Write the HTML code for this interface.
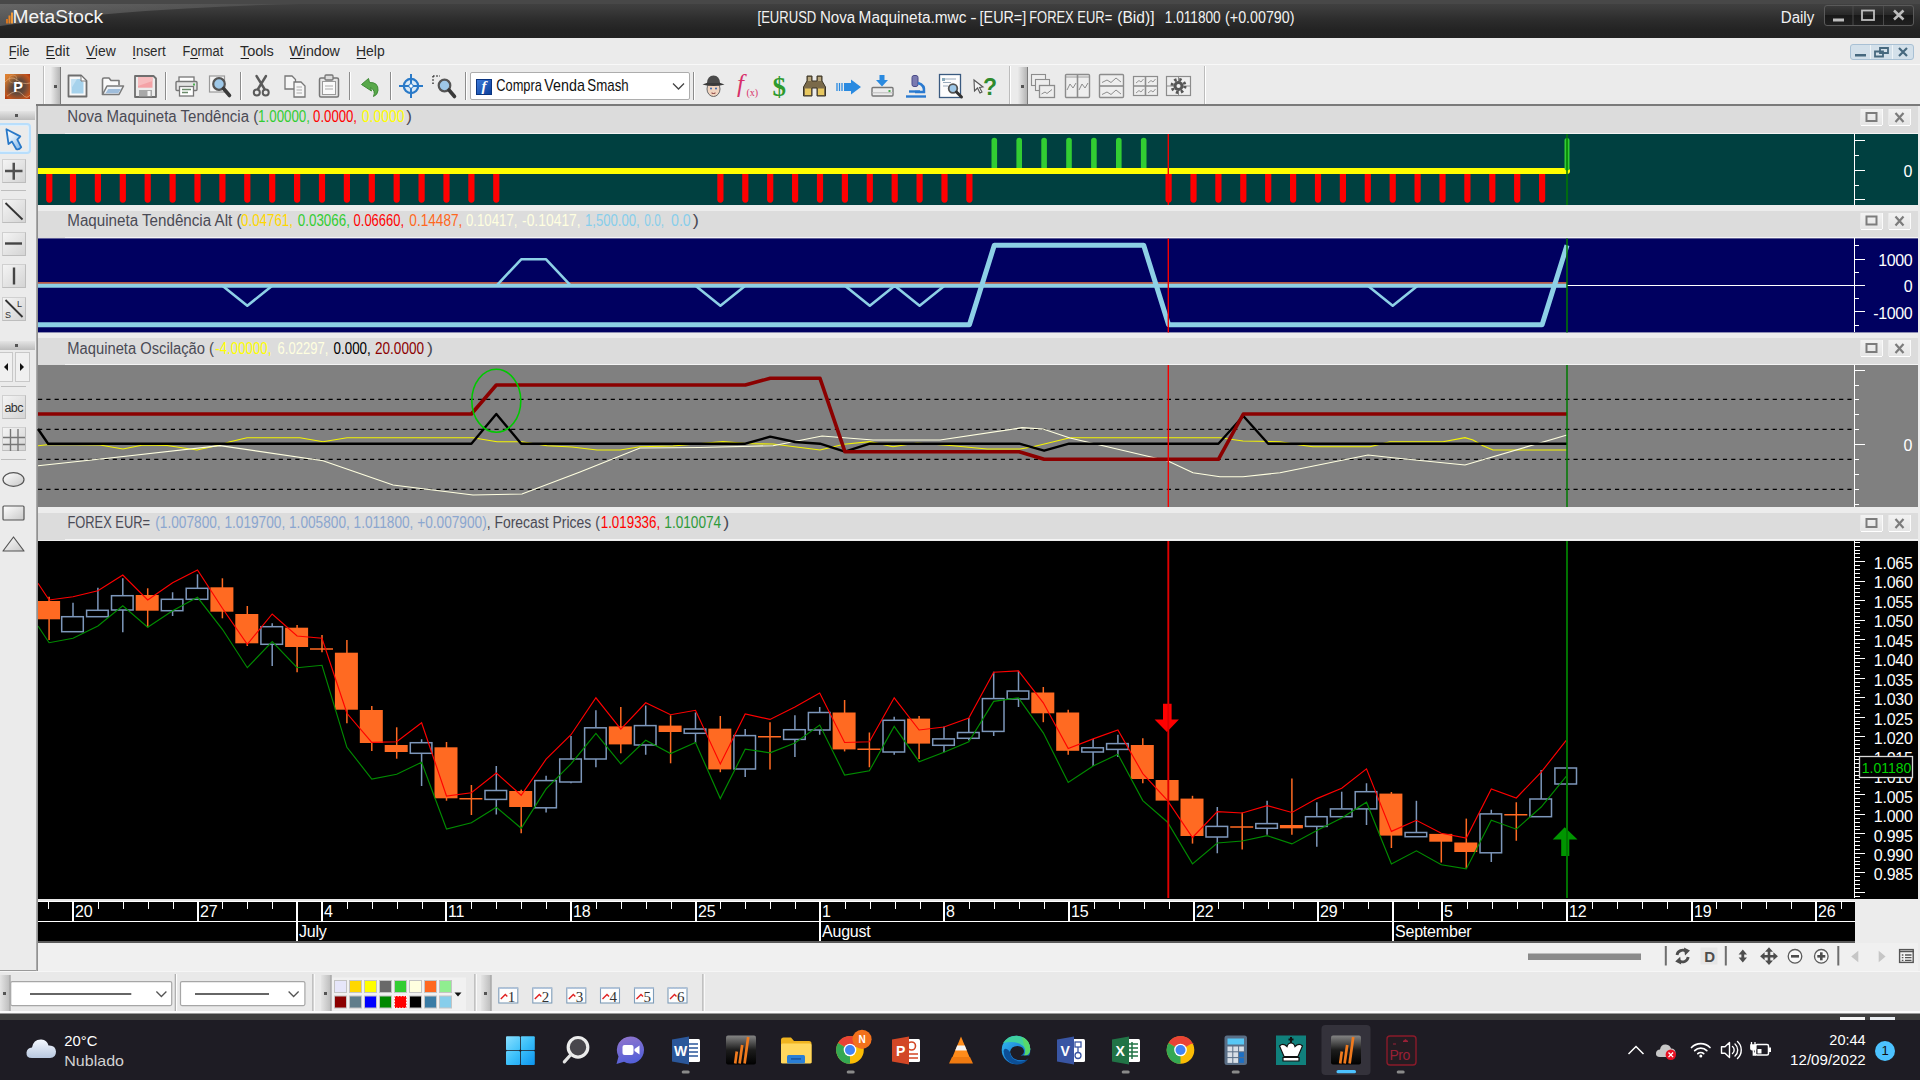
<!DOCTYPE html>
<html lang="pt"><head><meta charset="utf-8"><title>MetaStock - EURUSD Nova Maquineta</title>
<style>
*{box-sizing:border-box;margin:0;padding:0}
html,body{width:1920px;height:1080px;overflow:hidden;background:#f0f0f0}
body{font-family:"Liberation Sans",sans-serif;font-size:15px;color:#000}
#root{position:relative;width:1920px;height:1080px;overflow:hidden;background:#ececec}
.abs{position:absolute}
svg{position:absolute;left:0;top:0;overflow:visible}
svg text{font-family:"Liberation Sans",sans-serif}
#titlebar{left:0;top:0;width:1920px;height:38px;background:linear-gradient(#444 0,#3c3c3c 8px,#2c2c2c 20px,#232323 30px,#222 38px);color:#fff}
#titlebar .logo{left:14px;top:3px;font-size:21px;letter-spacing:-0.3px;color:#f2f2f2}
#titlebar .ttl{left:757px;top:8px;font-size:15px;white-space:pre;letter-spacing:-0.45px;color:#f4f4f4}
#titlebar .daily{left:1781px;top:8px;font-size:15px;letter-spacing:-0.3px;color:#f4f4f4}
#menubar{left:0;top:38px;width:1920px;height:27px;background:#ebebeb;border-bottom:1px solid #f8f8f8}
#menubar span{position:absolute;top:4px;font-size:15px;color:#1a1a1a;letter-spacing:-0.35px}
#menubar u{text-decoration-thickness:1px;text-underline-offset:2px}
#toolbar{left:0;top:65px;width:1920px;height:39px;background:#ebebeb}
#tbline{left:36px;top:104px;width:1884px;height:2px;background:#7a7a7a}
.vsep{position:absolute;width:1px;background:#8c8c8c;box-shadow:1px 0 0 #fff}
.ptitle{position:absolute;left:38px;width:1880px;background:#dcdcdc;font-size:15px;color:#4a4a55;white-space:pre;letter-spacing:0.05px}
.ptitle .t{position:absolute;left:30px;top:2px}
.ptitle .n{letter-spacing:-0.75px}
.pbtn{position:absolute;width:21px;height:16px;background:linear-gradient(#f2f2f2,#e4e4e4);box-shadow:0 1px 0 #fff,1px 0 0 #fafafa,-1px 0 0 #e8e8e8}
.lt{position:absolute;left:0;top:106px;width:36px;height:865px;background:#ebebeb}
.ltb{position:absolute;left:2px;width:24px;height:24px;background:linear-gradient(135deg,#f4f4f4,#d4d4d4);border:1px solid #d0d0d0;border-right-color:#bdbdbd;border-bottom-color:#bdbdbd}

</style></head>
<body>
<div id="root">
<div id="titlebar" class="abs"><svg width="1920" height="38"><defs><linearGradient id="wb" x1="0" y1="0" x2="0" y2="1"><stop offset="0" stop-color="#3c3c3c"/><stop offset=".5" stop-color="#262626"/><stop offset=".5" stop-color="#181818"/><stop offset="1" stop-color="#202020"/></linearGradient><linearGradient id="sheen" x1="0" y1="0" x2="1" y2="0"><stop offset="0" stop-color="#fff" stop-opacity=".2"/><stop offset="1" stop-color="#fff" stop-opacity=".07"/></linearGradient></defs><rect x="0" y="0" width="1920" height="4" fill="#484848"/><path d="M0 4 H300 Q130 8 0 26 Z" fill="url(#sheen)"/><rect x="6" y="19" width="2" height="4.500" fill="#d8741e"/><rect x="8.500" y="15.500" width="2" height="8" fill="#e6862a"/><rect x="11" y="12.500" width="2" height="11" fill="#f09a3a"/><text x="12.6" y="23.4" font-size="19.2" fill="#f4f4f4" textLength="90.6" lengthAdjust="spacingAndGlyphs" >MetaStock</text><text x="757.5" y="23.2" font-size="16" fill="#f2f2f2" textLength="58.8" lengthAdjust="spacingAndGlyphs" >[EURUSD</text><text x="819.9" y="23.2" font-size="16" fill="#f2f2f2" textLength="35.2" lengthAdjust="spacingAndGlyphs" >Nova</text><text x="858.6" y="23.2" font-size="16" fill="#f2f2f2" textLength="107.8" lengthAdjust="spacingAndGlyphs" >Maquineta.mwc</text><text x="970.3" y="23.2" font-size="16" fill="#f2f2f2" textLength="6.4" lengthAdjust="spacingAndGlyphs" >-</text><text x="979.6" y="23.2" font-size="16" fill="#f2f2f2" textLength="46.6" lengthAdjust="spacingAndGlyphs" >[EUR=]</text><text x="1029.2" y="23.2" font-size="16" fill="#f2f2f2" textLength="44.5" lengthAdjust="spacingAndGlyphs" >FOREX</text><text x="1077.3" y="23.2" font-size="16" fill="#f2f2f2" textLength="34.9" lengthAdjust="spacingAndGlyphs" >EUR=</text><text x="1117.3" y="23.2" font-size="16" fill="#f2f2f2" textLength="37.2" lengthAdjust="spacingAndGlyphs" >(Bid)]</text><text x="1164.8" y="23.2" font-size="16" fill="#f2f2f2" textLength="55.9" lengthAdjust="spacingAndGlyphs" >1.011800</text><text x="1225.1" y="23.2" font-size="16" fill="#f2f2f2" textLength="69.3" lengthAdjust="spacingAndGlyphs" >(+0.00790)</text><text x="1780.8" y="23.2" font-size="16" fill="#f2f2f2" textLength="33.4" lengthAdjust="spacingAndGlyphs" >Daily</text><rect x="1824.500" y="5.500" width="89" height="20" rx="2.500" fill="url(#wb)" stroke="#5a5a5a"/><path d="M1853 6 V25 M1883.500 6 V25" stroke="#4a4a4a"/><rect x="1833" y="18.500" width="11" height="3" fill="#bdbdbd"/><rect x="1862" y="10.500" width="12" height="9.500" fill="none" stroke="#bdbdbd" stroke-width="1.800"/><path d="M1894 10.500 L1903.500 19.500 M1903.500 10.500 L1894 19.500" stroke="#bdbdbd" stroke-width="2.600"/></svg></div>
<div id="menubar" class="abs"><svg width="1920" height="27"><text x="8.7" y="17.8" font-size="14" fill="#2a2a2a" textLength="20.8" lengthAdjust="spacingAndGlyphs" >File</text><rect x="9.4" y="20" width="6.9" height="1" fill="#1a1a1a"/><text x="45.6" y="17.8" font-size="14" fill="#2a2a2a" textLength="23.9" lengthAdjust="spacingAndGlyphs" >Edit</text><rect x="46.3" y="20" width="8.7" height="1" fill="#1a1a1a"/><text x="85.8" y="17.8" font-size="14" fill="#2a2a2a" textLength="29.9" lengthAdjust="spacingAndGlyphs" >View</text><rect x="86.5" y="20" width="9.5" height="1" fill="#1a1a1a"/><text x="132.3" y="17.8" font-size="14" fill="#2a2a2a" textLength="33.4" lengthAdjust="spacingAndGlyphs" >Insert</text><rect x="133" y="20" width="2.5" height="1" fill="#1a1a1a"/><text x="182.6" y="17.8" font-size="14" fill="#2a2a2a" textLength="40.6" lengthAdjust="spacingAndGlyphs" >Format</text><rect x="190.2" y="20" width="7.8" height="1" fill="#1a1a1a"/><text x="239.9" y="17.8" font-size="14" fill="#2a2a2a" textLength="33.8" lengthAdjust="spacingAndGlyphs" >Tools</text><rect x="240.6" y="20" width="8.4" height="1" fill="#1a1a1a"/><text x="289.3" y="17.8" font-size="14" fill="#2a2a2a" textLength="50.6" lengthAdjust="spacingAndGlyphs" >Window</text><rect x="290" y="20" width="14.5" height="1" fill="#1a1a1a"/><text x="356.0" y="17.8" font-size="14" fill="#2a2a2a" textLength="28.7" lengthAdjust="spacingAndGlyphs" >Help</text><rect x="356.7" y="20" width="9.3" height="1" fill="#1a1a1a"/><rect x="1850.500" y="6.500" width="63" height="15" rx="2.500" fill="#d3e0ea" stroke="#a8c0d4"/><path d="M1870.500 7 V21 M1892.500 7 V21" stroke="#eef4f8"/><rect x="1855" y="16" width="11" height="2.500" fill="#46687e"/><path d="M1880 10 H1888 V15 H1880 Z M1875 13.500 H1883 V18.500 H1875 Z" fill="#d3e0ea" stroke="#46687e" stroke-width="1.800"/><path d="M1899 10 L1907 18 M1907 10 L1899 18" stroke="#46687e" stroke-width="2.200"/></svg></div>
<div id="toolbar" class="abs"></div><div id="tbline" class="abs"></div>
<div class="vsep" style="left:165.0px;top:72px;height:28px"></div><div class="vsep" style="left:240.0px;top:72px;height:28px"></div><div class="vsep" style="left:349.0px;top:72px;height:28px"></div><div class="vsep" style="left:390.0px;top:72px;height:28px"></div><div class="vsep" style="left:465.0px;top:72px;height:28px"></div><div class="vsep" style="left:692.5px;top:72px;height:28px"></div><div class="vsep" style="left:43.0px;top:66px;height:38px;background:#bcbcbc"></div><div class="vsep" style="left:1009.0px;top:66px;height:38px;background:#bcbcbc"></div><div class="vsep" style="left:1204.0px;top:66px;height:38px;background:#bcbcbc"></div>
<div class="abs" style="left:51px;top:67px;width:10px;height:37px;background:linear-gradient(90deg,#e9e9e9,#b4b4b4);border-right:1px solid #7c7c7c"></div><div class="abs" style="left:54px;top:85px;width:3px;height:3px;background:#555"></div><div class="abs" style="left:1017.5px;top:67px;width:10px;height:37px;background:linear-gradient(90deg,#e9e9e9,#b4b4b4);border-right:1px solid #7c7c7c"></div><div class="abs" style="left:1020.5px;top:85px;width:3px;height:3px;background:#555"></div><div class="abs" style="left:470px;top:72px;width:220px;height:28px;background:#fff;border:1px solid #adadad;border-radius:2px"></div><div class="abs" style="left:476px;top:79px;width:16px;height:16px;background:linear-gradient(135deg,#3a78d8,#0d3f9a);border:1px solid #0a3480;color:#fff;font-family:'Liberation Serif',serif;font-style:italic;font-weight:bold;font-size:15px;line-height:13px;text-align:center">f</div><svg width="1920" height="110"><path d="M673 83.500 L678.500 89 L684 83.500" fill="none" stroke="#444" stroke-width="1.3"/>
<text x="496.3" y="91.2" font-size="15.7" fill="#111" textLength="45.6" lengthAdjust="spacingAndGlyphs" >Compra</text><text x="544.3" y="91.2" font-size="15.7" fill="#111" textLength="40.6" lengthAdjust="spacingAndGlyphs" >Venda</text><text x="587.3" y="91.2" font-size="15.7" fill="#111" textLength="41.4" lengthAdjust="spacingAndGlyphs" >Smash</text><g transform="translate(5,74)"><defs><radialGradient id="pg" cx=".5" cy=".5" r=".75"><stop offset="0" stop-color="#3c3834"/><stop offset=".42" stop-color="#6a4a38"/><stop offset=".75" stop-color="#c2541c"/><stop offset="1" stop-color="#a02810"/></radialGradient><linearGradient id="pg2" x1="0" y1="0" x2="1" y2="1"><stop offset="0" stop-color="#f0a040" stop-opacity=".75"/><stop offset=".4" stop-color="#f0a040" stop-opacity="0"/></linearGradient></defs><rect width="25" height="25" fill="url(#pg)"/><rect width="25" height="25" fill="url(#pg2)"/><path d="M0 8 Q6 1 12 6 T25 9" stroke="#f0c090" stroke-width="1" fill="none" opacity=".55"/><path d="M2 22 Q12 14 17 20 T25 21" stroke="#f0c8a0" stroke-width="1" fill="none" opacity=".5"/><circle cx="8" cy="5" r="4" fill="none" stroke="#f0c090" stroke-width=".8" opacity=".4"/><text x="8.300" y="18" font-size="14.500" font-weight="bold" fill="#fff">P</text></g>
<g transform="translate(67,74)"><path d="M1.5 1.5 H14 L19.5 7 V22.5 H1.5 Z" fill="#f8f8f8" stroke="#6e6e6e" stroke-width="1.8" stroke-linejoin="round"/><path d="M4.500 5 H13 L16.500 8.500 V19.500 H4.500 Z" fill="#a6d2ec"/><path d="M4.500 5 H10 L4.500 14 Z" fill="#c4e2f4"/><path d="M14 2 V7 H19" fill="#fff" stroke="#7a7a7a" stroke-width="1"/></g>
<g transform="translate(101,76)"><path d="M1.5 18.500 V3.5 Q1.5 2 3 2 H8 L10 4.5 H18 V9" fill="#fafafa" stroke="#7a7a7a" stroke-width="1.6" stroke-linejoin="round"/><path d="M1.5 18.500 L6 10 H22.500 L18 18.500 Z" fill="#eef2f6" stroke="#7a7a7a" stroke-width="1.6" stroke-linejoin="round"/><path d="M4.5 17.200 L7.300 13 H20 L17.200 17.200 Z" fill="#9fbddb"/></g>
<g transform="translate(134,75)"><path d="M1 1 H19.500 L22 3.500 V22 H1 Z" fill="#ececec" stroke="#6e6e6e" stroke-width="1.8" stroke-linejoin="round"/><rect x="4" y="2.200" width="14.500" height="10.500" fill="#f4a2a6"/><path d="M4 2.200 H18.500 V6 L4 11 Z" fill="#f7bcbe"/><rect x="5" y="15" width="13" height="6.500" fill="#a8a8a8"/><rect x="13.500" y="16" width="3" height="5" fill="#f4f4f4"/></g>
<g transform="translate(175,76)"><rect x="4" y="1" width="15" height="6" fill="#fff" stroke="#777" stroke-width="1.3"/><rect x="1" y="5.5" width="21" height="9" rx="1" fill="#e4e4e4" stroke="#777" stroke-width="1.4"/><rect x="18" y="7.5" width="2" height="2" fill="#4caf50"/><rect x="4.5" y="10.5" width="14" height="9.5" fill="#fff" stroke="#777" stroke-width="1.3"/><path d="M7 13.5 H16 M7 16.5 H13" stroke="#6a8a6a" stroke-width="1.4"/></g>
<g transform="translate(208,74)"><rect x="1.5" y="2" width="15" height="16" fill="#f4f4f4" stroke="#9a9a9a" stroke-width="1.2"/><circle cx="11" cy="10" r="5.8" fill="#9ec8e8" stroke="#555" stroke-width="2.2"/><path d="M15.5 14.5 L21.5 21.5" stroke="#3a3a3a" stroke-width="3.6" stroke-linecap="round"/></g>
<g transform="translate(252,75)"><path d="M4.5 1 L12.5 14 M14 1 L6 14" stroke="#5a5a5a" stroke-width="2.4" stroke-linecap="round"/><circle cx="4.8" cy="17.5" r="3" fill="none" stroke="#5a5a5a" stroke-width="2"/><circle cx="13.7" cy="17.5" r="3" fill="none" stroke="#5a5a5a" stroke-width="2"/></g>
<g transform="translate(284,75)"><path d="M1 1 H8 L11.5 4.5 V14 H1 Z" fill="#f6f6f6" stroke="#777" stroke-width="1.3"/><path d="M10 7 H17 L21 11 V22 H10 Z" fill="#f6f6f6" stroke="#777" stroke-width="1.3"/><path d="M12.5 12 H18 M12.5 15 H18 M12.5 18 H18" stroke="#aaa" stroke-width="1"/></g>
<g transform="translate(318,74)"><rect x="1.5" y="4" width="19" height="19" rx="1.5" fill="#e6e6e6" stroke="#777" stroke-width="1.5"/><rect x="4.5" y="7.5" width="13" height="13" fill="#fafafa" stroke="#9a9a9a" stroke-width="1"/><rect x="7" y="1" width="8" height="5" rx="1" fill="#dcdcdc" stroke="#777" stroke-width="1.3"/><path d="M7 12 H15 M7 15 H15" stroke="#aaa" stroke-width="1"/></g>
<g transform="translate(360,76)"><path d="M1.5 8.5 L8.5 2.5 L9.5 6.5 Q18.5 6 18 14.5 Q17.5 19 13.5 20.5 Q16 14.5 10.5 11.5 L11.5 15 Z" fill="#58a84a" stroke="#3d8a34" stroke-width="1"/></g>
<g transform="translate(399,74)"><circle cx="12" cy="12" r="7.2" fill="#dbeaf6" stroke="#2a7ac8" stroke-width="2.2"/><path d="M12 0 V24 M0 12 H24" stroke="#2a7ac8" stroke-width="2"/><circle cx="12" cy="12" r="2.2" fill="#fff" stroke="#2a7ac8" stroke-width="1"/></g>
<g transform="translate(432,75)"><path d="M1 1 H8 M1 1 V9" stroke="#444" stroke-width="1.6" stroke-dasharray="1.6 1.6"/><circle cx="12.5" cy="10.5" r="5.8" fill="#9ec8e8" stroke="#555" stroke-width="2.2"/><path d="M17 15 L22.5 21.5" stroke="#3a3a3a" stroke-width="3.6" stroke-linecap="round"/></g>
<g transform="translate(702,74)"><ellipse cx="11.5" cy="15" rx="6.5" ry="7.5" fill="#f0d4c0" stroke="#6a6a6a" stroke-width="1"/><path d="M0.5 10.5 Q11.5 5 22.5 10.5 Q11.5 13.5 0.5 10.5 Z" fill="#3a3a3a"/><path d="M5 9 Q5.5 1.5 11.5 1.5 Q17.5 1.5 18 9 Z" fill="#4a4a4a"/><circle cx="9" cy="14.5" r="1" fill="#3a6ab0"/><circle cx="14" cy="14.5" r="1" fill="#3a6ab0"/><path d="M9.5 19 Q11.5 20 13.5 19" stroke="#803030" fill="none"/></g>
<g transform="translate(736,73)"><text x="1" y="19" style="font-family:Liberation Serif,serif;font-style:italic" font-size="25" fill="#d8306a">f</text><text x="10.500" y="22.500" style="font-family:Liberation Serif,serif" font-size="10" fill="#d8306a">(x)</text></g>
<g transform="translate(772,72)"><text x="0.5" y="24" style="font-family:Liberation Serif,serif" font-weight="bold" font-size="27" fill="#2e9a2e">$</text></g>
<g transform="translate(803,75)"><path d="M4 1 H9 V6 H14 V1 H19 V6 L22.5 12 V21 H14 V13 H9 V21 H0.5 V12 L4 6 Z" fill="#7a6a4a" stroke="#3a3426" stroke-width="1"/><rect x="2" y="13.5" width="6" height="6.5" fill="#e8c860"/><rect x="15" y="13.5" width="6" height="6.5" fill="#e8c860"/><rect x="5" y="2" width="3" height="4" fill="#b8a880"/><rect x="15" y="2" width="3" height="4" fill="#b8a880"/></g>
<g transform="translate(836,79)"><path d="M1 4 V12 M3.5 4 V12 M6 4 V12" stroke="#2a8ae0" stroke-width="1.3"/><path d="M8 4 H15 V0.5 L25 8 L15 15.5 V12 H8 Z" fill="#2a8ae0"/></g>
<g transform="translate(871,75)"><path d="M8.5 0 H13.5 V5 H17 L11 11.5 L5 5 H8.5 Z" fill="#2a8ae0"/><rect x="1" y="12.5" width="21" height="8.5" rx="1" fill="#ececec" stroke="#777" stroke-width="1.4"/><rect x="17.5" y="15" width="2" height="2" fill="#4caf50"/><path d="M1 17.8 H22" stroke="#bbb"/></g>
<g transform="translate(905,75)"><rect x="7" y="0.5" width="6" height="11" rx="2" fill="#7a7ab0" stroke="#4a4a88" stroke-width="1"/><path d="M13 8 Q20 10 19 17 H10" fill="none" stroke="#2a7ad0" stroke-width="2.6"/><path d="M1 21.5 H21" stroke="#2a7ad0" stroke-width="2.4"/><path d="M4 16.5 H15" stroke="#2a7ad0" stroke-width="2.4"/></g>
<g transform="translate(939,74)"><rect x="0.5" y="0.5" width="21" height="23" fill="#fdfdfd" stroke="#3a5a80" stroke-width="1.3"/><path d="M4 5 H17 M4 8.5 H12 M4 12 H9" stroke="#9ab" stroke-width="1.2"/><rect x="3" y="4" width="3" height="3" fill="#8ab"/><circle cx="14" cy="14.5" r="4.3" fill="#9ec8e8" stroke="#555" stroke-width="1.8"/><path d="M17.5 18 L22.5 23" stroke="#333" stroke-width="3" stroke-linecap="round"/></g>
<g transform="translate(973,75)"><path d="M1 5 L1.5 16 L4.5 13 L7 18 L9 17 L6.5 12.5 L10 12 Z" fill="#f4f4f4" stroke="#555" stroke-width="1.1"/><text x="10" y="20" font-weight="bold" font-size="23" fill="#2e8a2e">?</text></g>
<g transform="translate(1031,74)"><rect x="0.5" y="0.5" width="14" height="11" fill="#eee" stroke="#8c8c8c" stroke-width="1.1"/><rect x="4.5" y="5.5" width="14" height="11" fill="#eee" stroke="#8c8c8c" stroke-width="1.1"/><rect x="8.5" y="11.5" width="15" height="12" fill="#eee" stroke="#8c8c8c" stroke-width="1.3"/><path d="M10.5 20 L14 18 L16 19.5 L21 15.5" stroke="#8c8c8c" fill="none"/></g>
<g transform="translate(1065,74)"><rect x="0.5" y="0.5" width="24" height="23" rx="1" fill="#eee" stroke="#8c8c8c" stroke-width="1.4"/><path d="M12.5 0.5 V23.5" stroke="#8c8c8c" stroke-width="1.6"/><path d="M2 16 L5 10 L8 14 L11 9 M14 16 L17 10 L20 14 L23 9" stroke="#8c8c8c" fill="none" stroke-width="1"/><path d="M1 3 H24" stroke="#8c8c8c" stroke-width=".8"/></g>
<g transform="translate(1099,74)"><rect x="0.5" y="0.5" width="24" height="23" rx="1" fill="#eee" stroke="#8c8c8c" stroke-width="1.4"/><path d="M0.5 12 H24.5" stroke="#8c8c8c" stroke-width="1.6"/><path d="M3 8.5 L8 6 L12 8.5 L17 4 L22 8 M3 20.5 L8 18 L12 20.5 L17 16 L22 20" stroke="#8c8c8c" fill="none" stroke-width="1"/></g>
<g transform="translate(1133,76)"><rect x="0.5" y="0.5" width="24" height="19" fill="#eee" stroke="#8c8c8c" stroke-width="1.2"/><path d="M12.5 0.5 V19.5 M0.5 10 H24.5" stroke="#8c8c8c" stroke-width="1.6"/><path d="M3 7 L6 4.5 L8 6 L10.5 3 M15 7 L18 4.5 L20 6 L22.5 3 M3 17 L6 14.5 L8 16 L10.5 13 M15 17 L18 14.5 L20 16 L22.5 13" stroke="#8c8c8c" fill="none" stroke-width=".9"/></g>
<g transform="translate(1166,76)"><rect x="0.5" y="0.5" width="24" height="19" fill="#eee" stroke="#8c8c8c" stroke-width="1.2"/><path d="M12.5 0.5 V19.5 M0.5 10 H24.5" stroke="#8c8c8c" stroke-width="1"/><circle cx="12.5" cy="10" r="5" fill="#555"/><circle cx="12.5" cy="10" r="6.5" fill="none" stroke="#555" stroke-width="3" stroke-dasharray="2.4 2.7"/><circle cx="12.5" cy="10" r="2" fill="#eee"/></g>
</svg>
<div class="lt"></div><div class="abs" style="left:0;top:970px;width:37px;height:1px;background:#9a9a9a"></div><div class="abs" style="left:35.500px;top:106px;width:2px;height:865px;background:linear-gradient(90deg,#b4b4b4,#868686)"></div>
<div class="abs" style="left:0;top:111px;width:35px;height:9px;background:linear-gradient(#e4e4e4,#bcbcbc)"></div><div class="abs" style="left:15px;top:114px;width:3px;height:3px;background:#555"></div><div class="abs" style="left:0;top:341px;width:35px;height:9px;background:linear-gradient(#e4e4e4,#bcbcbc)"></div><div class="abs" style="left:15px;top:344px;width:3px;height:3px;background:#555"></div><div class="abs" style="left:-3px;top:122.5px;width:34px;height:31px;background:#ebebeb;border:2.5px solid #b8defc;border-radius:4px;box-shadow:inset 0 0 0 1px #dceefc"></div><div class="ltb" style="top:159px"></div><div class="ltb" style="top:199px"></div><div class="ltb" style="top:231.5px"></div><div class="ltb" style="top:264px"></div><div class="ltb" style="top:296.5px"></div><div class="ltb" style="top:395px"></div><div class="ltb" style="top:427px"></div><div class="abs" style="left:1px;top:190px;width:25px;height:1px;background:#bdbdbd"></div><div class="abs" style="left:1px;top:386px;width:25px;height:1px;background:#bdbdbd"></div><div class="abs" style="left:1px;top:458.5px;width:25px;height:1px;background:#bdbdbd"></div><div class="abs" style="left:0;top:352px;width:13px;height:30px;background:#f0f0f0;border:1px solid #c8c8c8;border-left:none"></div><div class="abs" style="left:15px;top:352px;width:15px;height:30px;background:#f0f0f0;border:1px solid #c8c8c8"></div><svg width="40" height="980"><defs><linearGradient id="arw" x1="0" y1="0" x2="1" y2="1"><stop offset="0" stop-color="#fff"/><stop offset=".45" stop-color="#d6e8f8"/><stop offset="1" stop-color="#7ab2e8"/></linearGradient></defs><path d="M6.4 129.2 L8.5 144 L12 141.6 L16.4 149.2 Q19 150 21.2 147.2 L17.3 139.7 L20.3 136.4 Z" fill="url(#arw)" stroke="#2878c8" stroke-width="1.8" stroke-linejoin="round"/><path d="M5 171 H22.5 M13.75 162.7 V179.8" stroke="#505050" stroke-width="2.5"/><path d="M5.500 203 L22.500 219.500" stroke="#333" stroke-width="1.8"/><path d="M5 243.500 H22" stroke="#444" stroke-width="2.4"/><path d="M14 267.500 V284.500" stroke="#444" stroke-width="2.4"/><path d="M5.500 300 L22.500 317" stroke="#333" stroke-width="1.8"/><text x="17" y="307" font-size="9" fill="#333">L</text><text x="5" y="318" font-size="9" fill="#333">S</text><path d="M8 363 L4 367 L8 371 Z M20 363 L24 367 L20 371 Z" fill="#111"/><text x="4.500" y="412" font-size="12.500" fill="#333" letter-spacing="-0.6">abc</text><path d="M3 437.500 H25 M3 444.500 H25 M10.500 429 V451 M18 429 V451" stroke="#777" stroke-width="1.4"/><defs><linearGradient id="shp" x1="0" y1="0" x2="1" y2="1"><stop offset="0" stop-color="#fff"/><stop offset="1" stop-color="#c8c8c8"/></linearGradient></defs><ellipse cx="13.500" cy="479.500" rx="10.500" ry="6.800" fill="url(#shp)" stroke="#555" stroke-width="1.2"/><rect x="3" y="506" width="21" height="14" rx="1" fill="url(#shp)" stroke="#555" stroke-width="1.2"/><path d="M13.500 537 L24 551 H3 Z" fill="url(#shp)" stroke="#555" stroke-width="1.2" stroke-linejoin="round"/></svg>
<div class="ptitle" style="top:106px;height:28px"><div class="abs" style="left:27px;bottom:0;width:1853px;height:1px;background:#f4f4f4"></div><div class="pbtn" style="left:1823px;top:3px"></div><div class="pbtn" style="left:1851px;top:3px"></div></div>
<div class="ptitle" style="top:210.5px;height:27.5px"><div class="abs" style="left:27px;bottom:0;width:1853px;height:1px;background:#f4f4f4"></div><div class="pbtn" style="left:1823px;top:2px"></div><div class="pbtn" style="left:1851px;top:2px"></div></div>
<div class="ptitle" style="top:338px;height:27px"><div class="abs" style="left:27px;bottom:0;width:1853px;height:1px;background:#f4f4f4"></div><div class="pbtn" style="left:1823px;top:2px"></div><div class="pbtn" style="left:1851px;top:2px"></div></div>
<div class="ptitle" style="top:513px;height:27px"><div class="abs" style="left:27px;bottom:0;width:1853px;height:1px;background:#f4f4f4"></div><div class="pbtn" style="left:1823px;top:2px"></div><div class="pbtn" style="left:1851px;top:2px"></div></div>
<svg width="1920" height="1080">
<rect x="1866.500" y="113.0" width="10" height="8" fill="none" stroke="#7c7c7c" stroke-width="2"/><path d="M1895.500 113.0 L1903.500 122.0 M1903.500 113.0 L1895.500 122.0" stroke="#7c7c7c" stroke-width="2.2"/><rect x="1866.500" y="216.5" width="10" height="8" fill="none" stroke="#7c7c7c" stroke-width="2"/><path d="M1895.500 216.5 L1903.500 225.5 M1903.500 216.5 L1895.500 225.5" stroke="#7c7c7c" stroke-width="2.2"/><rect x="1866.500" y="344.0" width="10" height="8" fill="none" stroke="#7c7c7c" stroke-width="2"/><path d="M1895.500 344.0 L1903.500 353.0 M1903.500 344.0 L1895.500 353.0" stroke="#7c7c7c" stroke-width="2.2"/><rect x="1866.500" y="519.0" width="10" height="8" fill="none" stroke="#7c7c7c" stroke-width="2"/><path d="M1895.500 519.0 L1903.500 528.0 M1903.500 519.0 L1895.500 528.0" stroke="#7c7c7c" stroke-width="2.2"/>
<g font-size="15"><text x="67.3" y="122.2" font-size="15.6" fill="#4a4a55" textLength="190.9" lengthAdjust="spacingAndGlyphs" >Nova Maquineta Tendência (</text><text x="258.1" y="122.2" font-size="15.6" fill="#32cd32" textLength="51.9" lengthAdjust="spacingAndGlyphs" >1.00000,</text><text x="313.1" y="122.2" font-size="15.6" fill="#ff0000" textLength="43.9" lengthAdjust="spacingAndGlyphs" >0.0000,</text><text x="361.8" y="122.2" font-size="15.6" fill="#ffff00" textLength="42.7" lengthAdjust="spacingAndGlyphs" >0.0000</text><text x="406.3" y="122.2" font-size="15.6" fill="#4a4a55" textLength="5.7" lengthAdjust="spacingAndGlyphs" >)</text><text x="67.3" y="225.5" font-size="15.6" fill="#4a4a55" textLength="174.2" lengthAdjust="spacingAndGlyphs" >Maquineta Tendência Alt (</text><text x="241.0" y="225.5" font-size="15.6" fill="#ffd700" textLength="52.0" lengthAdjust="spacingAndGlyphs" >0.04761,</text><text x="297.8" y="225.5" font-size="15.6" fill="#32cd32" textLength="52.1" lengthAdjust="spacingAndGlyphs" >0.03066,</text><text x="353.6" y="225.5" font-size="15.6" fill="#ff0000" textLength="50.4" lengthAdjust="spacingAndGlyphs" >0.06660,</text><text x="409.3" y="225.5" font-size="15.6" fill="#ff6820" textLength="53.1" lengthAdjust="spacingAndGlyphs" >0.14487,</text><text x="466.0" y="225.5" font-size="15.6" fill="#ffffe0" textLength="51.4" lengthAdjust="spacingAndGlyphs" >0.10417,</text><text x="522.0" y="225.5" font-size="15.6" fill="#ffffe0" textLength="58.7" lengthAdjust="spacingAndGlyphs" >-0.10417,</text><text x="585.0" y="225.5" font-size="15.6" fill="#87ceeb" textLength="54.7" lengthAdjust="spacingAndGlyphs" >1,500.00,</text><text x="644.3" y="225.5" font-size="15.6" fill="#87ceeb" textLength="19.7" lengthAdjust="spacingAndGlyphs" >0.0,</text><text x="671.0" y="225.5" font-size="15.6" fill="#87ceeb" textLength="19.7" lengthAdjust="spacingAndGlyphs" >0.0</text><text x="692.8" y="225.5" font-size="15.6" fill="#4a4a55" textLength="6.2" lengthAdjust="spacingAndGlyphs" >)</text><text x="67.3" y="353.8" font-size="15.6" fill="#4a4a55" textLength="146.7" lengthAdjust="spacingAndGlyphs" >Maquineta Oscilação (</text><text x="215.3" y="353.8" font-size="15.6" fill="#ffff00" textLength="56.1" lengthAdjust="spacingAndGlyphs" >-4.00000,</text><text x="277.6" y="353.8" font-size="15.6" fill="#ffffe0" textLength="50.8" lengthAdjust="spacingAndGlyphs" >6.02297,</text><text x="333.6" y="353.8" font-size="15.6" fill="#000" textLength="37.1" lengthAdjust="spacingAndGlyphs" >0.000,</text><text x="375.0" y="353.8" font-size="15.6" fill="#8b0000" textLength="49.0" lengthAdjust="spacingAndGlyphs" >20.0000</text><text x="427.0" y="353.8" font-size="15.6" fill="#4a4a55" textLength="6.0" lengthAdjust="spacingAndGlyphs" >)</text><text x="67.4" y="528.3" font-size="15.6" fill="#4a4a55" textLength="82.7" lengthAdjust="spacingAndGlyphs" >FOREX EUR=</text><text x="155.3" y="528.3" font-size="15.6" fill="#8ba6cf" textLength="331.4" lengthAdjust="spacingAndGlyphs" >(1.007800, 1.019700, 1.005800, 1.011800, +0.007900)</text><text x="486.7" y="528.3" font-size="15.6" fill="#4a4a55" textLength="113.1" lengthAdjust="spacingAndGlyphs" >, Forecast Prices (</text><text x="600.7" y="528.3" font-size="15.6" fill="#ff0000" textLength="59.5" lengthAdjust="spacingAndGlyphs" >1.019336,</text><text x="664.3" y="528.3" font-size="15.6" fill="#2e9a3a" textLength="56.9" lengthAdjust="spacingAndGlyphs" >1.010074</text><text x="723.3" y="528.3" font-size="15.6" fill="#4a4a55" textLength="6.0" lengthAdjust="spacingAndGlyphs" >)</text></g>
<rect x="38" y="134" width="1880" height="71" fill="#004040" shape-rendering="crispEdges"/>
<g stroke="#ff0000" stroke-width="6.200" stroke-linecap="round"><path d="M49.3 174 V199.600"/><path d="M73 174 V199.600"/><path d="M97.9 174 V199.600"/><path d="M122.8 174 V199.600"/><path d="M147.7 174 V199.600"/><path d="M172.6 174 V199.600"/><path d="M197.5 174 V199.600"/><path d="M222.4 174 V199.600"/><path d="M247.3 174 V199.600"/><path d="M272.2 174 V199.600"/><path d="M297.1 174 V199.600"/><path d="M322 174 V199.600"/><path d="M346.9 174 V199.600"/><path d="M371.8 174 V199.600"/><path d="M396.7 174 V199.600"/><path d="M421.6 174 V199.600"/><path d="M446.5 174 V199.600"/><path d="M471.4 174 V199.600"/><path d="M496.3 174 V199.600"/><path d="M720.4 174 V199.600"/><path d="M745.3 174 V199.600"/><path d="M770.2 174 V199.600"/><path d="M795.1 174 V199.600"/><path d="M820 174 V199.600"/><path d="M844.9 174 V199.600"/><path d="M869.8 174 V199.600"/><path d="M894.7 174 V199.600"/><path d="M919.6 174 V199.600"/><path d="M944.5 174 V199.600"/><path d="M969.4 174 V199.600"/><path d="M1168.6 174 V199.600"/><path d="M1193.5 174 V199.600"/><path d="M1218.4 174 V199.600"/><path d="M1243.3 174 V199.600"/><path d="M1268.2 174 V199.600"/><path d="M1293.1 174 V199.600"/><path d="M1318 174 V199.600"/><path d="M1342.9 174 V199.600"/><path d="M1367.8 174 V199.600"/><path d="M1392.7 174 V199.600"/><path d="M1417.6 174 V199.600"/><path d="M1442.5 174 V199.600"/><path d="M1467.4 174 V199.600"/><path d="M1492.3 174 V199.600"/><path d="M1517.2 174 V199.600"/><path d="M1542.1 174 V199.600"/></g>
<g stroke="#32cd32" stroke-width="5.600" stroke-linecap="round"><path d="M994.3 140.500 V168"/><path d="M1019.2 140.500 V168"/><path d="M1044.1 140.500 V168"/><path d="M1069 140.500 V168"/><path d="M1093.9 140.500 V168"/><path d="M1118.8 140.500 V168"/><path d="M1143.7 140.500 V168"/></g>
<path d="M38 171 H1567" stroke="#ffff00" stroke-width="6"/><circle cx="1567" cy="171" r="3" fill="#ffff00"/>
<path d="M1567 140.500 V168" stroke="#32cd32" stroke-width="5" stroke-linecap="round"/>
<g stroke="#fff" stroke-width="1.2" shape-rendering="crispEdges"><path d="M1854.500 134 V205"/><path d="M1855 140.5 h10"/><path d="M1855 155.5 h4"/><path d="M1855 170.5 h10"/><path d="M1855 185.5 h4"/><path d="M1855 199.5 h10"/></g><text x="1912.300" y="176.800" font-size="16" fill="#fff" text-anchor="end">0</text>
<rect x="38" y="238.400" width="1880" height="94" fill="#000060"/>
<path d="M1567 285.500 H1855" stroke="#fff" stroke-width="1.2" shape-rendering="crispEdges"/><path d="M38 283 H1567" stroke="#f07840" stroke-width="1.400"/><path d="M38 285.700 H1567" stroke="#8dd0e6" stroke-width="4"/>
<polyline points="38,285.8 48.1,285.8 73,285.8 97.9,285.8 122.8,285.8 147.7,285.8 172.6,285.8 197.5,285.8 222.4,285.8 247.3,305.7 272.2,285.8 297.1,285.8 322,285.8 346.9,285.8 371.8,285.8 396.7,285.8 421.6,285.8 446.5,285.8 471.4,285.8 496.3,285.8 521.2,259.3 546.1,259.3 571,285.8 595.9,285.8 620.8,285.8 645.7,285.8 670.6,285.8 695.5,285.8 720.4,305.7 745.3,285.8 770.2,285.8 795.1,285.8 820,285.8 844.9,285.8 869.8,305.7 894.7,285.8 919.6,305.7 944.5,285.8 969.4,285.8 994.3,285.8 1019.2,285.8 1044.1,285.8 1069,285.8 1093.9,285.8 1118.8,285.8 1143.7,285.8 1168.6,285.8 1193.5,285.8 1218.4,285.8 1243.3,285.8 1268.2,285.8 1293.1,285.8 1318,285.8 1342.9,285.8 1367.8,285.8 1392.7,305.7 1417.6,285.8 1442.5,285.8 1467.4,285.8 1492.3,285.8 1517.2,285.8 1542.1,285.8 1567,285.8" fill="none" stroke="#8dd0e6" stroke-width="2.600" stroke-linejoin="round"/>
<polyline points="38,324.8 48.1,324.8 73,324.8 97.9,324.8 122.8,324.8 147.7,324.8 172.6,324.8 197.5,324.8 222.4,324.8 247.3,324.8 272.2,324.8 297.1,324.8 322,324.8 346.9,324.8 371.8,324.8 396.7,324.8 421.6,324.8 446.5,324.8 471.4,324.8 496.3,324.8 521.2,324.8 546.1,324.8 571,324.8 595.9,324.8 620.8,324.8 645.7,324.8 670.6,324.8 695.5,324.8 720.4,324.8 745.3,324.8 770.2,324.8 795.1,324.8 820,324.8 844.9,324.8 869.8,324.8 894.7,324.8 919.6,324.8 944.5,324.8 969.4,324.8 994.3,245.3 1019.2,245.3 1044.1,245.3 1069,245.3 1093.9,245.3 1118.8,245.3 1143.7,245.3 1168.6,324.8 1193.5,324.8 1218.4,324.8 1243.3,324.8 1268.2,324.8 1293.1,324.8 1318,324.8 1342.9,324.8 1367.8,324.8 1392.7,324.8 1417.6,324.8 1442.5,324.8 1467.4,324.8 1492.3,324.8 1517.2,324.8 1542.1,324.8 1567,245.3" fill="none" stroke="#8dd0e6" stroke-width="5" stroke-linejoin="round" stroke-linecap="butt"/>
<g stroke="#fff" stroke-width="1.2" shape-rendering="crispEdges"><path d="M1854.500 238 V332"/><path d="M1855 245.5 h4"/><path d="M1855 259.5 h10"/><path d="M1855 272.5 h4"/><path d="M1855 285.5 h10"/><path d="M1855 298.5 h4"/><path d="M1855 311.5 h10"/><path d="M1855 325.5 h4"/></g><g font-size="16" fill="#fff" text-anchor="end" letter-spacing="-0.4"><text x="1912.300" y="266.300">1000</text><text x="1912.300" y="292.200">0</text><text x="1912.300" y="318.600">-1000</text></g>
<rect x="38" y="365" width="1880" height="142" fill="#808080" shape-rendering="crispEdges"/>
<g stroke="#000" stroke-width="1.3" stroke-dasharray="4.2 4.1"><path d="M38 399.3 H1855"/><path d="M38 429.3 H1855"/><path d="M38 459.3 H1855"/><path d="M38 489.3 H1855"/></g>
<polyline points="38,445.7 50,444.5 100,445 123,449 143,445 167,445.5 197,450 220,445 230,441.7 247,437.7 300,437.7 323,441.7 347,437.7 473,437.7 497,441.7 522,441.7 547,445.7 572,447 597,450 620,450 640,446.7 673,446 723,441.7 750,443.7 773,444 820,450 844,444.3 870,441.7 893,446.7 917,443 953,445.7 987,449 1020,449 1033,446.7 1070,437.7 1220,437.7 1243,441 1280,441.7 1300,445 1313,446.7 1370,446.7 1377,445 1390,441.7 1443,441.7 1465,437.7 1473,440 1483,445.7 1493,450 1567,450" fill="none" stroke="#f4f400" stroke-width="1.150"/>
<polyline points="38,465.7 110,458 220,445.7 323,460.7 393,485 473,495 522,494 580,472 640,448 700,447.5 773,445.7 822,436 873,440 940,440 1022,427.7 1043,429 1070,438 1150,456.7 1168,461 1193,472.7 1220,476.7 1243,476.7 1280,472.7 1368,455 1393,457.7 1465,465 1567,435" fill="none" stroke="#ffffe0" stroke-width="1.150"/>
<polyline points="38,429 48.1,443.7 73,443.7 97.9,443.7 122.8,443.7 147.7,443.7 172.6,443.7 197.5,443.7 222.4,443.7 247.3,443.7 272.2,443.7 297.1,443.7 322,443.7 346.9,443.7 371.8,443.7 396.7,443.7 421.6,443.7 446.5,443.7 471.4,443.7 496.3,414 521.2,443.7 546.1,443.7 571,443.7 595.9,443.7 620.8,443.7 645.7,443.7 670.6,443.7 695.5,443.7 720.4,443.7 745.3,443.7 770.2,436.7 795.1,442 820,443.7 844.9,451.7 869.8,443.7 894.7,443.7 919.6,443.7 944.5,443.7 969.4,443.7 994.3,443.7 1019.2,443.7 1044.1,450.7 1069,443.7 1093.9,443.7 1118.8,443.7 1143.7,443.7 1168.6,443.7 1193.5,443.7 1218.4,443.7 1243.3,416 1268.2,443.7 1293.1,443.7 1318,443.7 1342.9,443.7 1367.8,443.7 1392.7,443.7 1417.6,443.7 1442.5,443.7 1467.4,443.7 1492.3,443.7 1517.2,443.7 1542.1,443.7 1567,443.7" fill="none" stroke="#000" stroke-width="2.400" stroke-linejoin="round"/>
<polyline points="38,414 48.1,414 73,414 97.9,414 122.8,414 147.7,414 172.6,414 197.5,414 222.4,414 247.3,414 272.2,414 297.1,414 322,414 346.9,414 371.8,414 396.7,414 421.6,414 446.5,414 471.4,414 496.3,385 521.2,385 546.1,385 571,385 595.9,385 620.8,385 645.7,385 670.6,385 695.5,385 720.4,385 745.3,385 770.2,378.3 795.1,378.3 820,378.3 844.9,451.7 869.8,451.7 894.7,451.7 919.6,451.7 944.5,451.7 969.4,451.7 994.3,451.7 1019.2,451.7 1044.1,459.3 1069,459.3 1093.9,459.3 1118.8,459.3 1143.7,459.3 1168.6,459.3 1193.5,459.3 1218.4,459.3 1243.3,414 1268.2,414 1293.1,414 1318,414 1342.9,414 1367.8,414 1392.7,414 1417.6,414 1442.5,414 1467.4,414 1492.3,414 1517.2,414 1542.1,414 1567,414" fill="none" stroke="#8b0000" stroke-width="3.600" stroke-linejoin="round"/>
<ellipse cx="496.3" cy="400.700" rx="24.500" ry="31.500" fill="none" stroke="#00c800" stroke-width="1.600"/>
<g stroke="#fff" stroke-width="1.2" shape-rendering="crispEdges"><path d="M1854.500 365 V507"/><path d="M1855 370.5 h10"/><path d="M1855 385.5 h4"/><path d="M1855 399.5 h4"/><path d="M1855 414.5 h4"/><path d="M1855 429.5 h4"/><path d="M1855 444.5 h10"/><path d="M1855 459.5 h4"/><path d="M1855 474.5 h4"/><path d="M1855 489.5 h4"/><path d="M1855 504.5 h4"/></g><text x="1912.300" y="451.300" font-size="16" fill="#fff" text-anchor="end">0</text>
<rect x="38" y="541" width="1880" height="357.500" fill="#000" shape-rendering="crispEdges"/>
<clipPath id="c4"><rect x="38" y="541" width="1817" height="357"/></clipPath><g clip-path="url(#c4)">
<path d="M49.1 596.7 V640" stroke="#ff6a22" stroke-width="1.5"/><rect x="37.1" y="601" width="23" height="18.3" fill="#ff6a22"/>
<path d="M73 602.7 V616.7 M73 631.7 V631.7" stroke="#7d97bb" stroke-width="1.5"/><rect x="61.7" y="616.7" width="21.600" height="15" fill="none" stroke="#7d97bb" stroke-width="1.5"/>
<path d="M97.9 587.7 V610.3 M97.9 616.7 V616.7" stroke="#7d97bb" stroke-width="1.5"/><rect x="86.6" y="610.3" width="21.600" height="6.4" fill="none" stroke="#7d97bb" stroke-width="1.5"/>
<path d="M122.8 578.3 V595.7 M122.8 610 V632.3" stroke="#7d97bb" stroke-width="1.5"/><rect x="111.5" y="595.7" width="21.600" height="14.3" fill="none" stroke="#7d97bb" stroke-width="1.5"/>
<path d="M147.7 588.3 V627.3" stroke="#ff6a22" stroke-width="1.5"/><rect x="135.7" y="595" width="23" height="15.7" fill="#ff6a22"/>
<path d="M172.6 592.3 V599.3 M172.6 610.7 V616" stroke="#7d97bb" stroke-width="1.5"/><rect x="161.3" y="599.3" width="21.600" height="11.4" fill="none" stroke="#7d97bb" stroke-width="1.5"/>
<path d="M197.5 574.3 V588.3 M197.5 599.3 V599.3" stroke="#7d97bb" stroke-width="1.5"/><rect x="186.2" y="588.3" width="21.600" height="11" fill="none" stroke="#7d97bb" stroke-width="1.5"/>
<path d="M222.4 578.3 V618.3" stroke="#ff6a22" stroke-width="1.5"/><rect x="210.4" y="587.3" width="23" height="24.4" fill="#ff6a22"/>
<path d="M247.3 606 V646" stroke="#ff6a22" stroke-width="1.5"/><rect x="235.3" y="614" width="23" height="29.3" fill="#ff6a22"/>
<path d="M272.2 623.3 V626.7 M272.2 644.3 V666" stroke="#7d97bb" stroke-width="1.5"/><rect x="260.9" y="626.7" width="21.600" height="17.6" fill="none" stroke="#7d97bb" stroke-width="1.5"/>
<path d="M297.1 625 V672.3" stroke="#ff6a22" stroke-width="1.5"/><rect x="285.1" y="627.7" width="23" height="19.3" fill="#ff6a22"/>
<path d="M322 635 V652.3 M310 649 H333" stroke="#ff6a22" stroke-width="1.5"/>
<path d="M346.9 640 V723.3" stroke="#ff6a22" stroke-width="1.5"/><rect x="334.9" y="652.7" width="23" height="57" fill="#ff6a22"/>
<path d="M371.8 706 V751" stroke="#ff6a22" stroke-width="1.5"/><rect x="359.8" y="710" width="23" height="33" fill="#ff6a22"/>
<path d="M396.7 727.3 V758.7" stroke="#ff6a22" stroke-width="1.5"/><rect x="384.7" y="745" width="23" height="7" fill="#ff6a22"/>
<path d="M421.6 739.3 V742.7 M421.6 753.3 V786" stroke="#7d97bb" stroke-width="1.5"/><rect x="410.3" y="742.7" width="21.600" height="10.6" fill="none" stroke="#7d97bb" stroke-width="1.5"/>
<path d="M446.5 742 V800.7" stroke="#ff6a22" stroke-width="1.5"/><rect x="434.5" y="747.3" width="23" height="51" fill="#ff6a22"/>
<path d="M471.4 785 V815 M459.4 798.7 H482.4" stroke="#ff6a22" stroke-width="1.5"/>
<path d="M496.3 766 V790.5 M496.3 799.4 V814.6" stroke="#7d97bb" stroke-width="1.5"/><rect x="485" y="790.5" width="21.600" height="8.9" fill="none" stroke="#7d97bb" stroke-width="1.5"/>
<path d="M521.2 789.7 V833.3" stroke="#ff6a22" stroke-width="1.5"/><rect x="509.2" y="791" width="23" height="16" fill="#ff6a22"/>
<path d="M546.1 775.8 V780.6 M546.1 807.8 V812.5" stroke="#7d97bb" stroke-width="1.5"/><rect x="534.8" y="780.6" width="21.600" height="27.2" fill="none" stroke="#7d97bb" stroke-width="1.5"/>
<path d="M571 736 V759 M571 782 V783.3" stroke="#7d97bb" stroke-width="1.5"/><rect x="559.7" y="759" width="21.600" height="23" fill="none" stroke="#7d97bb" stroke-width="1.5"/>
<path d="M595.9 710.3 V727.8 M595.9 759 V767.2" stroke="#7d97bb" stroke-width="1.5"/><rect x="584.6" y="727.8" width="21.600" height="31.2" fill="none" stroke="#7d97bb" stroke-width="1.5"/>
<path d="M620.8 707 V753.3" stroke="#ff6a22" stroke-width="1.5"/><rect x="608.8" y="726.4" width="23" height="18" fill="#ff6a22"/>
<path d="M645.7 705.6 V725.6 M645.7 745 V754.7" stroke="#7d97bb" stroke-width="1.5"/><rect x="634.4" y="725.6" width="21.600" height="19.4" fill="none" stroke="#7d97bb" stroke-width="1.5"/>
<path d="M670.6 715.3 V763.3" stroke="#ff6a22" stroke-width="1.5"/><rect x="658.6" y="725.6" width="23" height="6.4" fill="#ff6a22"/>
<path d="M695.5 712.5 V729 M695.5 733.3 V743" stroke="#7d97bb" stroke-width="1.5"/><rect x="684.2" y="729" width="21.600" height="4.3" fill="none" stroke="#7d97bb" stroke-width="1.5"/>
<path d="M720.3 716 V772.2" stroke="#ff6a22" stroke-width="1.5"/><rect x="708.3" y="728.6" width="23" height="40.8" fill="#ff6a22"/>
<path d="M745.2 729 V735.6 M745.2 769 V777" stroke="#7d97bb" stroke-width="1.5"/><rect x="733.9" y="735.6" width="21.600" height="33.4" fill="none" stroke="#7d97bb" stroke-width="1.5"/>
<path d="M770 722.2 V769.4 M758 736.7 H781" stroke="#ff6a22" stroke-width="1.5"/>
<path d="M794.9 715.3 V729.7 M794.9 739.4 V757" stroke="#7d97bb" stroke-width="1.5"/><rect x="783.6" y="729.7" width="21.600" height="9.7" fill="none" stroke="#7d97bb" stroke-width="1.5"/>
<path d="M819.7 707 V712.5 M819.7 730 V734.7" stroke="#7d97bb" stroke-width="1.5"/><rect x="808.4" y="712.5" width="21.600" height="17.5" fill="none" stroke="#7d97bb" stroke-width="1.5"/>
<path d="M844.6 700 V751.4" stroke="#ff6a22" stroke-width="1.5"/><rect x="832.6" y="712.5" width="23" height="36.9" fill="#ff6a22"/>
<path d="M869.4 732.5 V767.2 M857.4 749.2 H880.4" stroke="#ff6a22" stroke-width="1.5"/>
<path d="M894.2 716.7 V720.3 M894.2 752 V754.7" stroke="#7d97bb" stroke-width="1.5"/><rect x="883" y="720.3" width="21.600" height="31.7" fill="none" stroke="#7d97bb" stroke-width="1.5"/>
<path d="M919.1 716 V759" stroke="#ff6a22" stroke-width="1.5"/><rect x="907.1" y="718.6" width="23" height="25" fill="#ff6a22"/>
<path d="M944 726.4 V738.9 M944 745.3 V752.2" stroke="#7d97bb" stroke-width="1.5"/><rect x="932.7" y="738.9" width="21.600" height="6.4" fill="none" stroke="#7d97bb" stroke-width="1.5"/>
<path d="M968.8 718 V732.5 M968.8 738.3 V740.3" stroke="#7d97bb" stroke-width="1.5"/><rect x="957.5" y="732.5" width="21.600" height="5.8" fill="none" stroke="#7d97bb" stroke-width="1.5"/>
<path d="M993.7 671.7 V698.6 M993.7 731.4 V736" stroke="#7d97bb" stroke-width="1.5"/><rect x="982.4" y="698.6" width="21.600" height="32.8" fill="none" stroke="#7d97bb" stroke-width="1.5"/>
<path d="M1018.5 670.8 V691 M1018.5 699 V707" stroke="#7d97bb" stroke-width="1.5"/><rect x="1007.2" y="691" width="21.600" height="8" fill="none" stroke="#7d97bb" stroke-width="1.5"/>
<path d="M1043.3 687 V722.2" stroke="#ff6a22" stroke-width="1.5"/><rect x="1031.3" y="692.5" width="23" height="20.8" fill="#ff6a22"/>
<path d="M1068.2 709.7 V754.7" stroke="#ff6a22" stroke-width="1.5"/><rect x="1056.2" y="712.5" width="23" height="38.3" fill="#ff6a22"/>
<path d="M1093.1 739 V747.8 M1093.1 752 V766" stroke="#7d97bb" stroke-width="1.5"/><rect x="1081.8" y="747.8" width="21.600" height="4.2" fill="none" stroke="#7d97bb" stroke-width="1.5"/>
<path d="M1117.9 734.7 V743.6 M1117.9 749.4 V757" stroke="#7d97bb" stroke-width="1.5"/><rect x="1106.6" y="743.6" width="21.600" height="5.8" fill="none" stroke="#7d97bb" stroke-width="1.5"/>
<path d="M1142.8 738.3 V783.3" stroke="#ff6a22" stroke-width="1.5"/><rect x="1130.8" y="745" width="23" height="34" fill="#ff6a22"/>
<path d="M1167.6 780 V800.6" stroke="#ff6a22" stroke-width="1.5"/><rect x="1155.6" y="780" width="23" height="20.6" fill="#ff6a22"/>
<path d="M1192.5 795.8 V843.6" stroke="#ff6a22" stroke-width="1.5"/><rect x="1180.5" y="798.6" width="23" height="37.4" fill="#ff6a22"/>
<path d="M1217.3 807 V826.4 M1217.3 837 V853.3" stroke="#7d97bb" stroke-width="1.5"/><rect x="1206" y="826.4" width="21.600" height="10.6" fill="none" stroke="#7d97bb" stroke-width="1.5"/>
<path d="M1242.2 812.5 V849.4 M1230.2 827 H1253.2" stroke="#ff6a22" stroke-width="1.5"/>
<path d="M1267.1 800.8 V823.6 M1267.1 828.3 V834.7" stroke="#7d97bb" stroke-width="1.5"/><rect x="1255.8" y="823.6" width="21.600" height="4.7" fill="none" stroke="#7d97bb" stroke-width="1.5"/>
<path d="M1291.9 778.6 V834.7" stroke="#ff6a22" stroke-width="1.5"/><rect x="1279.9" y="825" width="23" height="3.3" fill="#ff6a22"/>
<path d="M1316.8 802.2 V816.7 M1316.8 826.4 V846.7" stroke="#7d97bb" stroke-width="1.5"/><rect x="1305.5" y="816.7" width="21.600" height="9.7" fill="none" stroke="#7d97bb" stroke-width="1.5"/>
<path d="M1341.7 791.7 V808.9 M1341.7 816.7 V816.7" stroke="#7d97bb" stroke-width="1.5"/><rect x="1330.4" y="808.9" width="21.600" height="7.8" fill="none" stroke="#7d97bb" stroke-width="1.5"/>
<path d="M1366.5 783.3 V791.7 M1366.5 808.9 V825" stroke="#7d97bb" stroke-width="1.5"/><rect x="1355.2" y="791.7" width="21.600" height="17.2" fill="none" stroke="#7d97bb" stroke-width="1.5"/>
<path d="M1391.4 792 V848" stroke="#ff6a22" stroke-width="1.5"/><rect x="1379.4" y="793.6" width="23" height="42" fill="#ff6a22"/>
<path d="M1416.4 800.8 V832.5 M1416.4 836.7 V836.7" stroke="#7d97bb" stroke-width="1.5"/><rect x="1405.1" y="832.5" width="21.600" height="4.2" fill="none" stroke="#7d97bb" stroke-width="1.5"/>
<path d="M1441.3 833.9 V862.5" stroke="#ff6a22" stroke-width="1.5"/><rect x="1429.3" y="833.9" width="23" height="7.8" fill="#ff6a22"/>
<path d="M1466.3 818.6 V868" stroke="#ff6a22" stroke-width="1.5"/><rect x="1454.3" y="842.5" width="23" height="9.5" fill="#ff6a22"/>
<path d="M1491.3 809.7 V813.9 M1491.3 852.8 V862" stroke="#7d97bb" stroke-width="1.5"/><rect x="1480" y="813.9" width="21.600" height="38.9" fill="none" stroke="#7d97bb" stroke-width="1.5"/>
<path d="M1516.3 802.2 V840.8 M1504.3 814.7 H1527.3" stroke="#ff6a22" stroke-width="1.5"/>
<path d="M1541.2 770 V799 M1541.2 816.7 V816.7" stroke="#7d97bb" stroke-width="1.5"/><rect x="1529.9" y="799" width="21.600" height="17.7" fill="none" stroke="#7d97bb" stroke-width="1.5"/>
<path d="M1566.2 768 V768 M1566.2 784 V784" stroke="#7d97bb" stroke-width="1.5"/><rect x="1554.9" y="768" width="21.600" height="16" fill="none" stroke="#7d97bb" stroke-width="1.5"/>
<polyline points="38,626 49.1,642.7 73,638.3 97.9,626 122.8,605.7 147.7,627.3 172.6,610.7 197.5,597.3 222.4,629.3 247.3,667.7 272.2,641.7 297.1,667.7 322,665.3 346.9,747.3 371.8,779 396.7,774.3 421.6,762.3 446.5,829 471.4,822.7 496.3,807.2 521.2,828.3 546.1,788.9 571,763.9 595.9,733.3 620.8,763.9 645.7,740.3 670.6,753.6 695.5,742.5 720.3,798.6 745.2,749.2 770,752.8 794.9,743 819.7,725 844.6,775 869.4,770.8 894.2,726.4 919.1,761.7 944,752.2 968.8,741.7 993.7,701.4 1018.5,697.8 1043.3,732.8 1068.2,782.5 1093.1,766 1117.9,754.2 1142.8,800.6 1167.6,822.2 1192.5,863.9 1217.3,843 1242.2,841 1267.1,835.6 1291.9,843.9 1316.8,830.6 1341.7,818 1366.5,802.2 1391.4,863.9 1416.4,850.8 1441.3,864.7 1466.3,868.9 1491.3,820.3 1516.3,829.2 1541.2,807 1566.2,776.4" fill="none" stroke="#008c00" stroke-width="1.150"/>
<polyline points="38,583.3 49.1,600 73,596.7 97.9,590.7 122.8,575 147.7,600 172.6,582.7 197.5,570 222.4,608.3 247.3,644.3 272.2,614 297.1,636 322,638.3 346.9,713.3 371.8,742.3 396.7,741.7 421.6,722.7 446.5,796 471.4,792.7 496.3,773 521.2,795.3 546.1,759.2 571,734.7 595.9,697.8 620.8,729.2 645.7,702.8 670.6,714.7 695.5,710.3 720.3,763.9 745.2,713.9 770,719.4 794.9,706.9 819.7,693 844.6,742.5 869.4,741.7 894.2,697.8 919.1,730 944,727 968.8,718 993.7,672.2 1018.5,670.8 1043.3,702.8 1068.2,748.6 1093.1,738.9 1117.9,730 1142.8,773.6 1167.6,800.6 1192.5,837.5 1217.3,811.7 1242.2,813 1267.1,805.6 1291.9,812.5 1316.8,798.6 1341.7,788.3 1366.5,768.9 1391.4,831.4 1416.4,820.3 1441.3,833.3 1466.3,838 1491.3,788.9 1516.3,798 1541.2,772.2 1566.2,740.3" fill="none" stroke="#ff0000" stroke-width="1.150"/>
</g>
<path d="M1163 703.700 H1171.600 V719.600 H1178.900 L1166.900 732 L1154.600 719.600 H1163 Z" fill="#ff0000"/>
<path d="M1561.200 856 H1569.300 V839.500 H1577.500 L1564.700 827.200 L1552.700 839.500 H1561.200 Z" fill="#009600"/>
<g stroke="#fff" stroke-width="1.2" shape-rendering="crispEdges"><path d="M1854.500 541 V898"/><path d="M1855 542.5 h4.5"/><path d="M1855 546.5 h4.5"/><path d="M1855 550.5 h4.5"/><path d="M1855 553.5 h4.5"/><path d="M1855 557.5 h4.5"/><path d="M1855 561.5 h10"/><path d="M1855 565.5 h4.5"/><path d="M1855 569.5 h4.5"/><path d="M1855 573.5 h4.5"/><path d="M1855 577.5 h4.5"/><path d="M1855 581.5 h10"/><path d="M1855 585.5 h4.5"/><path d="M1855 588.5 h4.5"/><path d="M1855 592.5 h4.5"/><path d="M1855 596.5 h4.5"/><path d="M1855 600.5 h10"/><path d="M1855 604.5 h4.5"/><path d="M1855 608.5 h4.5"/><path d="M1855 612.5 h4.5"/><path d="M1855 616.5 h4.5"/><path d="M1855 620.5 h10"/><path d="M1855 623.5 h4.5"/><path d="M1855 627.5 h4.5"/><path d="M1855 631.5 h4.5"/><path d="M1855 635.5 h4.5"/><path d="M1855 639.5 h10"/><path d="M1855 643.5 h4.5"/><path d="M1855 647.5 h4.5"/><path d="M1855 651.5 h4.5"/><path d="M1855 655.5 h4.5"/><path d="M1855 658.5 h10"/><path d="M1855 662.5 h4.5"/><path d="M1855 666.5 h4.5"/><path d="M1855 670.5 h4.5"/><path d="M1855 674.5 h4.5"/><path d="M1855 678.5 h10"/><path d="M1855 682.5 h4.5"/><path d="M1855 686.5 h4.5"/><path d="M1855 690.5 h4.5"/><path d="M1855 693.5 h4.5"/><path d="M1855 697.5 h10"/><path d="M1855 701.5 h4.5"/><path d="M1855 705.5 h4.5"/><path d="M1855 709.5 h4.5"/><path d="M1855 713.5 h4.5"/><path d="M1855 717.5 h10"/><path d="M1855 721.5 h4.5"/><path d="M1855 724.5 h4.5"/><path d="M1855 728.5 h4.5"/><path d="M1855 732.5 h4.5"/><path d="M1855 736.5 h10"/><path d="M1855 740.5 h4.5"/><path d="M1855 744.5 h4.5"/><path d="M1855 748.5 h4.5"/><path d="M1855 752.5 h4.5"/><path d="M1855 756.5 h10"/><path d="M1855 759.5 h4.5"/><path d="M1855 763.5 h4.5"/><path d="M1855 767.5 h4.5"/><path d="M1855 771.5 h4.5"/><path d="M1855 775.5 h10"/><path d="M1855 779.5 h4.5"/><path d="M1855 783.5 h4.5"/><path d="M1855 787.5 h4.5"/><path d="M1855 791.5 h4.5"/><path d="M1855 794.5 h10"/><path d="M1855 798.5 h4.5"/><path d="M1855 802.5 h4.5"/><path d="M1855 806.5 h4.5"/><path d="M1855 810.5 h4.5"/><path d="M1855 814.5 h10"/><path d="M1855 818.5 h4.5"/><path d="M1855 822.5 h4.5"/><path d="M1855 826.5 h4.5"/><path d="M1855 829.5 h4.5"/><path d="M1855 833.5 h10"/><path d="M1855 837.5 h4.5"/><path d="M1855 841.5 h4.5"/><path d="M1855 845.5 h4.5"/><path d="M1855 849.5 h4.5"/><path d="M1855 853.5 h10"/><path d="M1855 857.5 h4.5"/><path d="M1855 861.5 h4.5"/><path d="M1855 864.5 h4.5"/><path d="M1855 868.5 h4.5"/><path d="M1855 872.5 h10"/><path d="M1855 876.5 h4.5"/><path d="M1855 880.5 h4.5"/><path d="M1855 884.5 h4.5"/><path d="M1855 888.5 h4.5"/><path d="M1855 892.5 h10"/><path d="M1855 896.5 h4.5"/></g>
<g font-size="16" fill="#fff" text-anchor="end" letter-spacing="-0.25"><text x="1912.600" y="568.9">1.065</text><text x="1912.600" y="588.4">1.060</text><text x="1912.600" y="607.8">1.055</text><text x="1912.600" y="627.3">1.050</text><text x="1912.600" y="646.8">1.045</text><text x="1912.600" y="666.3">1.040</text><text x="1912.600" y="685.7">1.035</text><text x="1912.600" y="705.2">1.030</text><text x="1912.600" y="724.7">1.025</text><text x="1912.600" y="744.1">1.020</text><text x="1912.600" y="763.6">1.015</text><text x="1912.600" y="783.1">1.010</text><text x="1912.600" y="802.6">1.005</text><text x="1912.600" y="822">1.000</text><text x="1912.600" y="841.5">0.995</text><text x="1912.600" y="861">0.990</text><text x="1912.600" y="880.4">0.985</text></g>
<rect x="1859.500" y="756.500" width="53" height="21" fill="#000" stroke="#d8d8d8" stroke-width="1.300"/><text x="1886.500" y="772.500" font-size="14" fill="#00d000" text-anchor="middle">1.01180</text>
<path d="M1168.3 134 V205" stroke="#f40000" stroke-width="1.400"/><path d="M1567 134 V205" stroke="#007a00" stroke-width="1.500"/><path d="M1168.3 238.4 V332.4" stroke="#f40000" stroke-width="1.400"/><path d="M1567 238.4 V332.4" stroke="#007a00" stroke-width="1.500"/><path d="M1168.3 365 V507" stroke="#f40000" stroke-width="1.400"/><path d="M1567 365 V507" stroke="#007a00" stroke-width="1.500"/><path d="M1168.3 541 V899" stroke="#e00000" stroke-width="1.900"/><path d="M1567 541 V899" stroke="#007800" stroke-width="1.900"/>
<rect x="38" y="898" width="1817" height="44" fill="#000" shape-rendering="crispEdges"/>
<g shape-rendering="crispEdges"><rect x="38" y="899" width="1817" height="2" fill="#e6e6e6"/><rect x="38" y="901" width="1817" height="1" fill="#fff"/><rect x="38" y="921" width="1817" height="1.300" fill="#fff"/><rect x="38" y="941" width="1817" height="2" fill="#5a5a5a"/><rect x="47.5" y="902" width="1.500" height="6.500" fill="#fff"/><rect x="72.5" y="902" width="1.500" height="6.500" fill="#fff"/><rect x="97.5" y="902" width="1.500" height="6.500" fill="#fff"/><rect x="122.5" y="902" width="1.500" height="6.500" fill="#fff"/><rect x="147.5" y="902" width="1.500" height="6.500" fill="#fff"/><rect x="172.5" y="902" width="1.500" height="6.500" fill="#fff"/><rect x="197.5" y="902" width="1.500" height="6.500" fill="#fff"/><rect x="221.5" y="902" width="1.500" height="6.500" fill="#fff"/><rect x="246.5" y="902" width="1.500" height="6.500" fill="#fff"/><rect x="271.5" y="902" width="1.500" height="6.500" fill="#fff"/><rect x="296.5" y="902" width="1.500" height="6.500" fill="#fff"/><rect x="321.5" y="902" width="1.500" height="6.500" fill="#fff"/><rect x="346.5" y="902" width="1.500" height="6.500" fill="#fff"/><rect x="371.5" y="902" width="1.500" height="6.500" fill="#fff"/><rect x="396.5" y="902" width="1.500" height="6.500" fill="#fff"/><rect x="421.5" y="902" width="1.500" height="6.500" fill="#fff"/><rect x="445.5" y="902" width="1.500" height="6.500" fill="#fff"/><rect x="470.5" y="902" width="1.500" height="6.500" fill="#fff"/><rect x="495.5" y="902" width="1.500" height="6.500" fill="#fff"/><rect x="520.5" y="902" width="1.500" height="6.500" fill="#fff"/><rect x="545.5" y="902" width="1.500" height="6.500" fill="#fff"/><rect x="570.5" y="902" width="1.500" height="6.500" fill="#fff"/><rect x="595.5" y="902" width="1.500" height="6.500" fill="#fff"/><rect x="620.5" y="902" width="1.500" height="6.500" fill="#fff"/><rect x="645.5" y="902" width="1.500" height="6.500" fill="#fff"/><rect x="670.5" y="902" width="1.500" height="6.500" fill="#fff"/><rect x="695.5" y="902" width="1.500" height="6.500" fill="#fff"/><rect x="719.5" y="902" width="1.500" height="6.500" fill="#fff"/><rect x="744.5" y="902" width="1.500" height="6.500" fill="#fff"/><rect x="769.5" y="902" width="1.500" height="6.500" fill="#fff"/><rect x="794.5" y="902" width="1.500" height="6.500" fill="#fff"/><rect x="819.5" y="902" width="1.500" height="6.500" fill="#fff"/><rect x="844.5" y="902" width="1.500" height="6.500" fill="#fff"/><rect x="869.5" y="902" width="1.500" height="6.500" fill="#fff"/><rect x="894.5" y="902" width="1.500" height="6.500" fill="#fff"/><rect x="919.5" y="902" width="1.500" height="6.500" fill="#fff"/><rect x="943.5" y="902" width="1.500" height="6.500" fill="#fff"/><rect x="968.5" y="902" width="1.500" height="6.500" fill="#fff"/><rect x="993.5" y="902" width="1.500" height="6.500" fill="#fff"/><rect x="1018.5" y="902" width="1.500" height="6.500" fill="#fff"/><rect x="1043.5" y="902" width="1.500" height="6.500" fill="#fff"/><rect x="1068.5" y="902" width="1.500" height="6.500" fill="#fff"/><rect x="1093.5" y="902" width="1.500" height="6.500" fill="#fff"/><rect x="1118.5" y="902" width="1.500" height="6.500" fill="#fff"/><rect x="1143.5" y="902" width="1.500" height="6.500" fill="#fff"/><rect x="1168.5" y="902" width="1.500" height="6.500" fill="#fff"/><rect x="1193.5" y="902" width="1.500" height="6.500" fill="#fff"/><rect x="1217.5" y="902" width="1.500" height="6.500" fill="#fff"/><rect x="1242.5" y="902" width="1.500" height="6.500" fill="#fff"/><rect x="1267.5" y="902" width="1.500" height="6.500" fill="#fff"/><rect x="1292.5" y="902" width="1.500" height="6.500" fill="#fff"/><rect x="1317.5" y="902" width="1.500" height="6.500" fill="#fff"/><rect x="1342.5" y="902" width="1.500" height="6.500" fill="#fff"/><rect x="1367.5" y="902" width="1.500" height="6.500" fill="#fff"/><rect x="1392.5" y="902" width="1.500" height="6.500" fill="#fff"/><rect x="1417.5" y="902" width="1.500" height="6.500" fill="#fff"/><rect x="1441.5" y="902" width="1.500" height="6.500" fill="#fff"/><rect x="1466.5" y="902" width="1.500" height="6.500" fill="#fff"/><rect x="1491.5" y="902" width="1.500" height="6.500" fill="#fff"/><rect x="1516.5" y="902" width="1.500" height="6.500" fill="#fff"/><rect x="1541.5" y="902" width="1.500" height="6.500" fill="#fff"/><rect x="1566.5" y="902" width="1.500" height="6.500" fill="#fff"/><rect x="1591.5" y="902" width="1.500" height="6.500" fill="#fff"/><rect x="1616.5" y="902" width="1.500" height="6.500" fill="#fff"/><rect x="1641.5" y="902" width="1.500" height="6.500" fill="#fff"/><rect x="1666.5" y="902" width="1.500" height="6.500" fill="#fff"/><rect x="1691.5" y="902" width="1.500" height="6.500" fill="#fff"/><rect x="1715.5" y="902" width="1.500" height="6.500" fill="#fff"/><rect x="1740.5" y="902" width="1.500" height="6.500" fill="#fff"/><rect x="1765.5" y="902" width="1.500" height="6.500" fill="#fff"/><rect x="1790.5" y="902" width="1.500" height="6.500" fill="#fff"/><rect x="1815.5" y="902" width="1.500" height="6.500" fill="#fff"/><rect x="1840.5" y="902" width="1.500" height="6.500" fill="#fff"/><rect x="72" y="902" width="2" height="19" fill="#fff"/><rect x="197" y="902" width="2" height="19" fill="#fff"/><rect x="321" y="902" width="2" height="19" fill="#fff"/><rect x="445" y="902" width="2" height="19" fill="#fff"/><rect x="570" y="902" width="2" height="19" fill="#fff"/><rect x="695" y="902" width="2" height="19" fill="#fff"/><rect x="819" y="902" width="2" height="19" fill="#fff"/><rect x="943" y="902" width="2" height="19" fill="#fff"/><rect x="1068" y="902" width="2" height="19" fill="#fff"/><rect x="1193" y="902" width="2" height="19" fill="#fff"/><rect x="1317" y="902" width="2" height="19" fill="#fff"/><rect x="1441" y="902" width="2" height="19" fill="#fff"/><rect x="1566" y="902" width="2" height="19" fill="#fff"/><rect x="1691" y="902" width="2" height="19" fill="#fff"/><rect x="1815" y="902" width="2" height="19" fill="#fff"/><rect x="296" y="902" width="2" height="39" fill="#fff"/><rect x="819" y="902" width="2" height="39" fill="#fff"/><rect x="1392" y="902" width="2" height="39" fill="#fff"/></g>
<g font-size="16" fill="#fff" letter-spacing="-0.2"><text x="75" y="916.500">20</text><text x="200" y="916.500">27</text><text x="324" y="916.500">4</text><text x="448" y="916.500">11</text><text x="573" y="916.500">18</text><text x="698" y="916.500">25</text><text x="822" y="916.500">1</text><text x="946" y="916.500">8</text><text x="1071" y="916.500">15</text><text x="1196" y="916.500">22</text><text x="1320" y="916.500">29</text><text x="1444" y="916.500">5</text><text x="1569" y="916.500">12</text><text x="1694" y="916.500">19</text><text x="1818" y="916.500">26</text><text x="299" y="937.300">July</text><text x="822" y="937.300">August</text><text x="1395" y="937.300">September</text></g>
</svg>
<div class="abs" style="left:38px;top:943px;width:1880px;height:28px;background:#f0f0f0"></div><div class="abs" style="left:1855px;top:899px;width:65px;height:44px;background:#ececec"></div><div class="abs" style="left:0;top:971px;width:1920px;height:1px;background:#f6f6f6"></div><div class="abs" style="left:0;top:972px;width:1920px;height:39px;background:#e9e9e9"></div><div class="abs" style="left:0;top:1011px;width:1920px;height:2px;background:#fbfbfb"></div><div class="abs" style="left:0;top:1013px;width:1920px;height:1px;background:#9a9a9a"></div><div class="abs" style="left:0;top:1014px;width:1920px;height:6px;background:#3e3e3e"></div><div class="abs" style="left:1840px;top:1017px;width:25px;height:3px;background:#f4f4f4"></div><div class="abs" style="left:1870px;top:1017px;width:25px;height:3px;background:#e8ecf0"></div><div id="taskbar" class="abs" style="left:0;top:1020px;width:1920px;height:60px;background:#1e1c24"></div>
<svg width="1920" height="1080">
<rect x="1528" y="953.500" width="113" height="6.500" fill="#8a8a8a"/><rect x="1664.8" y="946" width="2" height="19.500" fill="#6e6e6e"/><rect x="1724.8" y="946" width="2" height="19.500" fill="#6e6e6e"/><rect x="1837.3" y="946" width="2" height="19.500" fill="#6e6e6e"/><rect x="1700.500" y="947.500" width="17" height="17" fill="#e6e6e6"/><g fill="none" stroke="#4d4d4d" stroke-width="2.8"><path d="M1677 955 A5.8 5.8 0 0 1 1686 951.200"/><path d="M1688.200 957 A5.8 5.8 0 0 1 1679.200 960.900"/></g><path d="M1684 947.500 L1690 950.500 L1685 955.500 Z M1681.200 964.600 L1675.200 961.500 L1680.200 956.700 Z" fill="#4d4d4d"/><text x="1704.300" y="961.600" font-size="15" font-weight="bold" fill="#4d4d4d">D</text><path d="M1742.800 949.500 L1747 954.500 H1744.200 V957.500 H1747 L1742.800 962.500 L1738.600 957.500 H1741.400 V954.500 H1738.600 Z" fill="#4d4d4d"/><path d="M1769 947.300 L1773 951.800 H1770.300 V954.900 H1773.400 V952.200 L1777.900 956.200 L1773.400 960.200 V957.500 H1770.300 V960.600 H1773 L1769 965.100 L1765 960.600 H1767.700 V957.500 H1764.600 V960.200 L1760.100 956.200 L1764.600 952.200 V954.900 H1767.700 V951.800 H1765 Z" fill="#4d4d4d"/><circle cx="1795" cy="956.300" r="6.800" fill="#f8f8f8" stroke="#5a5a5a" stroke-width="1.300"/><rect x="1791" y="955" width="8" height="2.600" fill="#4d4d4d"/><circle cx="1821.300" cy="956.300" r="6.800" fill="#f8f8f8" stroke="#5a5a5a" stroke-width="1.300"/><rect x="1817.300" y="955" width="8" height="2.600" fill="#4d4d4d"/><rect x="1820" y="952.300" width="2.600" height="8" fill="#4d4d4d"/><path d="M1858.300 950.800 V962.200 L1851.200 956.500 Z M1878.700 950.800 V962.200 L1885.600 956.500 Z" fill="#c6c6c6"/><rect x="1899.600" y="949.600" width="13.600" height="12.800" fill="#f4f4f4" stroke="#555" stroke-width="1.400"/><path d="M1899 951.500 H1914 M1905 955 H1911.500 M1905 957.700 H1911.500 M1905 960.300 H1911.500" stroke="#555" stroke-width="1.300"/><path d="M1901.800 955 h1.600 M1901.800 957.700 h1.600 M1901.800 960.300 h1.600" stroke="#555" stroke-width="1.300"/><rect x="331.500" y="977.500" width="134.500" height="33" fill="#f1f1f1"/><rect x="0" y="975" width="9.500" height="36" fill="url(#grp)"/><rect x="9.5" y="975" width="1" height="36" fill="#8a8a8a"/><rect x="3" y="992" width="3" height="3" fill="#555"/><rect x="321" y="975" width="9.500" height="36" fill="url(#grp)"/><rect x="330.5" y="975" width="1" height="36" fill="#8a8a8a"/><rect x="324" y="992" width="3" height="3" fill="#555"/><rect x="481" y="975" width="9.500" height="36" fill="url(#grp)"/><rect x="490.5" y="975" width="1" height="36" fill="#8a8a8a"/><rect x="484" y="992" width="3" height="3" fill="#555"/><defs><linearGradient id="grp" x1="0" y1="0" x2="1" y2="0"><stop offset="0" stop-color="#e4e4e4"/><stop offset="1" stop-color="#bdbdbd"/></linearGradient></defs><rect x="174.70000000000002" y="974" width="1.400" height="37" fill="#b0b0b0"/><rect x="176.1" y="974" width="1" height="37" fill="#fff"/><rect x="312.3" y="974" width="1.400" height="37" fill="#b0b0b0"/><rect x="313.7" y="974" width="1" height="37" fill="#fff"/><rect x="474.3" y="974" width="1.400" height="37" fill="#b0b0b0"/><rect x="475.7" y="974" width="1" height="37" fill="#fff"/><rect x="702.3" y="974" width="1.400" height="37" fill="#b0b0b0"/><rect x="703.7" y="974" width="1" height="37" fill="#fff"/><rect x="10.7" y="981.600" width="161.0" height="24" rx="1.500" fill="#fff" stroke="#a6a6a6" stroke-width="1.200"/><path d="M30 994 H131.3" stroke="#333" stroke-width="1.500"/><path d="M156.4 991.500 L161.4 996.500 L166.4 991.500" fill="none" stroke="#555" stroke-width="1.300"/><rect x="180.5" y="981.600" width="124.39999999999998" height="24" rx="1.500" fill="#fff" stroke="#a6a6a6" stroke-width="1.200"/><path d="M195 994 H269" stroke="#333" stroke-width="1.500"/><path d="M288.6 991.500 L293.6 996.500 L298.6 991.500" fill="none" stroke="#555" stroke-width="1.300"/><rect x="334.5" y="980.500" width="12" height="12" fill="#e6e6fa" stroke="#c4c4c4" stroke-width="1"/><rect x="349.5" y="980.500" width="12" height="12" fill="#ffd700" stroke="#c4c4c4" stroke-width="1"/><rect x="364.5" y="980.500" width="12" height="12" fill="#ffff00" stroke="#c4c4c4" stroke-width="1"/><rect x="379.5" y="980.500" width="12" height="12" fill="#696969" stroke="#c4c4c4" stroke-width="1"/><rect x="394.5" y="980.500" width="12" height="12" fill="#32cd32" stroke="#c4c4c4" stroke-width="1"/><rect x="409.5" y="980.500" width="12" height="12" fill="#ffffe0" stroke="#c4c4c4" stroke-width="1"/><rect x="424.5" y="980.500" width="12" height="12" fill="#ff6820" stroke="#c4c4c4" stroke-width="1"/><rect x="439.5" y="980.500" width="12" height="12" fill="#90ee90" stroke="#c4c4c4" stroke-width="1"/><rect x="334.5" y="996" width="12" height="12" fill="#8b0000" stroke="#c4c4c4" stroke-width="1"/><rect x="349.5" y="996" width="12" height="12" fill="#607d8b" stroke="#c4c4c4" stroke-width="1"/><rect x="364.5" y="996" width="12" height="12" fill="#0000ff" stroke="#c4c4c4" stroke-width="1"/><rect x="379.5" y="996" width="12" height="12" fill="#008800" stroke="#c4c4c4" stroke-width="1"/><rect x="394.5" y="996" width="12" height="12" fill="#ff0000" stroke="#fff" stroke-dasharray="1.5 1.5" stroke-width="1"/><rect x="409.5" y="996" width="12" height="12" fill="#000000" stroke="#c4c4c4" stroke-width="1"/><rect x="424.5" y="996" width="12" height="12" fill="#3a7ca5" stroke="#c4c4c4" stroke-width="1"/><rect x="439.5" y="996" width="12" height="12" fill="#87ceeb" stroke="#c4c4c4" stroke-width="1"/><path d="M454.500 992.500 H461.500 L458 996.500 Z" fill="#111"/><rect x="498.8" y="988" width="19" height="15" fill="#fdfdfd" stroke="#7f9db9" stroke-width="1.100"/><path d="M498.8 988.300 h19" stroke="#b0c4de" stroke-width="1.600" stroke-dasharray="2 1"/><path d="M500.8 999 L505.3 994.500 L507.3 996.500" stroke="#e02020" stroke-width="1.400" fill="none"/><text x="507.8" y="1002.300" style="font-family:Liberation Serif,serif" font-size="15" fill="#333">1</text><rect x="532.8" y="988" width="19" height="15" fill="#fdfdfd" stroke="#7f9db9" stroke-width="1.100"/><path d="M532.8 988.300 h19" stroke="#b0c4de" stroke-width="1.600" stroke-dasharray="2 1"/><path d="M534.8 999 L539.3 994.500 L541.3 996.500" stroke="#e02020" stroke-width="1.400" fill="none"/><text x="541.8" y="1002.300" style="font-family:Liberation Serif,serif" font-size="15" fill="#333">2</text><rect x="566.8" y="988" width="19" height="15" fill="#fdfdfd" stroke="#7f9db9" stroke-width="1.100"/><path d="M566.8 988.300 h19" stroke="#b0c4de" stroke-width="1.600" stroke-dasharray="2 1"/><path d="M568.8 999 L573.3 994.500 L575.3 996.500" stroke="#e02020" stroke-width="1.400" fill="none"/><text x="575.8" y="1002.300" style="font-family:Liberation Serif,serif" font-size="15" fill="#333">3</text><rect x="600.5" y="988" width="19" height="15" fill="#fdfdfd" stroke="#7f9db9" stroke-width="1.100"/><path d="M600.5 988.300 h19" stroke="#b0c4de" stroke-width="1.600" stroke-dasharray="2 1"/><path d="M602.5 999 L607 994.500 L609 996.500" stroke="#e02020" stroke-width="1.400" fill="none"/><text x="609.5" y="1002.300" style="font-family:Liberation Serif,serif" font-size="15" fill="#333">4</text><rect x="634.5" y="988" width="19" height="15" fill="#fdfdfd" stroke="#7f9db9" stroke-width="1.100"/><path d="M634.5 988.300 h19" stroke="#b0c4de" stroke-width="1.600" stroke-dasharray="2 1"/><path d="M636.5 999 L641 994.500 L643 996.500" stroke="#e02020" stroke-width="1.400" fill="none"/><text x="643.5" y="1002.300" style="font-family:Liberation Serif,serif" font-size="15" fill="#333">5</text><rect x="668.0" y="988" width="19" height="15" fill="#fdfdfd" stroke="#7f9db9" stroke-width="1.100"/><path d="M668.0 988.300 h19" stroke="#b0c4de" stroke-width="1.600" stroke-dasharray="2 1"/><path d="M670.0 999 L674.5 994.500 L676.5 996.500" stroke="#e02020" stroke-width="1.400" fill="none"/><text x="677.0" y="1002.300" style="font-family:Liberation Serif,serif" font-size="15" fill="#333">6</text>
<defs><linearGradient id="wn" gradientUnits="userSpaceOnUse" x1="506" y1="1036" x2="535" y2="1065"><stop offset="0" stop-color="#8ae0ff"/><stop offset=".5" stop-color="#3cc0fa"/><stop offset="1" stop-color="#0c94ee"/></linearGradient><linearGradient id="ms" x1="0" y1="0" x2="0" y2="1"><stop offset="0" stop-color="#858585"/><stop offset=".5" stop-color="#1c1c1c"/><stop offset="1" stop-color="#000"/></linearGradient><linearGradient id="cht" x1="0" y1="0" x2="0.3" y2="1"><stop offset="0" stop-color="#9476cc"/><stop offset="1" stop-color="#5560d8"/></linearGradient><linearGradient id="cld" x1="0" y1="0" x2="0" y2="1"><stop offset="0" stop-color="#f4f8ff"/><stop offset="1" stop-color="#b8c8e0"/></linearGradient></defs>
<path d="M32 1058 Q26 1058 26.500 1052.500 Q27 1048 32 1047.500 Q33.500 1039 41.500 1039.500 Q47 1040 48.500 1045.500 Q55.500 1045 56 1051.500 Q56 1058 50 1058 Z" fill="url(#cld)"/><rect x="506" y="1036.2" width="14" height="14" rx="1" fill="url(#wn)"/><rect x="520.8" y="1036.2" width="14" height="14" rx="1" fill="url(#wn)"/><rect x="506" y="1051" width="14" height="14" rx="1" fill="url(#wn)"/><rect x="520.8" y="1051" width="14" height="14" rx="1" fill="url(#wn)"/><circle cx="578" cy="1047.300" r="9.800" fill="#48464c" stroke="#ececec" stroke-width="3.200"/><path d="M570.500 1055 L564.300 1061.800" stroke="#e4e4e4" stroke-width="3.200" stroke-linecap="round"/><path d="M630.500 1036.500 A13.500 13.500 0 1 1 624 1061.800 L616.500 1064 L618.500 1056.500 A13.500 13.500 0 0 1 630.500 1036.500 Z" fill="url(#cht)"/><rect x="622.500" y="1045" width="11" height="10" rx="2" fill="#fff"/><path d="M634.500 1049 L639.500 1045.500 V1054.500 L634.500 1051 Z" fill="#fff"/><rect x="683" y="1039" width="17" height="23" rx="1.500" fill="#fff"/><path d="M686 1044 H698 M686 1048 H698 M686 1052 H698 M686 1056 H698" stroke="#2b579a" stroke-width="1.600"/><path d="M672 1039.500 L689 1036.500 V1064.500 L672 1061.500 Z" fill="#2b579a"/><text x="674" y="1056" font-size="14" font-weight="bold" fill="#fff">W</text><rect x="726" y="1035.500" width="30" height="29" rx="2" fill="url(#ms)"/><g stroke="#f07a1e" stroke-width="2.700"><path d="M735.2 1063.500 L736.8 1051.500"/><path d="M739.6 1063.500 L742.2 1045"/><path d="M744.6 1063.500 L748.2 1037"/></g><path d="M781 1040 Q781 1037.500 783.500 1037.500 H791 L794 1041 H809 Q811.500 1041 811.500 1043.500 V1063 H781 Z" fill="#f0b420"/><rect x="781" y="1043.500" width="30.500" height="20" rx="1.500" fill="#ffd75e"/><rect x="787" y="1055" width="18" height="8.500" rx="1.500" fill="#2a7fd6"/><rect x="791" y="1058" width="10" height="1.800" fill="#1a5aa8"/><circle cx="850" cy="1050" r="13.8" fill="#fbbc05"/><path d="M850 1050 L838.0 1043.1 A13.8 13.8 0 0 1 862.0 1043.1 Z" fill="#ea4335"/><path d="M850 1050 L838.0 1043.1 A13.8 13.8 0 0 0 850.0 1063.8 Z" fill="#34a853"/><path d="M850 1043.7 H863.5 A13.8 13.8 0 0 0 862.0 1043.1 Z" fill="#ea4335"/><circle cx="850" cy="1050" r="6.300" fill="#fff"/><circle cx="850" cy="1050" r="5" fill="#4285f4"/><circle cx="862" cy="1039.300" r="9.600" fill="#f2711c"/><text x="862" y="1043.200" font-size="10" font-weight="bold" fill="#fff" text-anchor="middle">N</text><rect x="903" y="1039" width="17" height="23" rx="1.500" fill="#fff"/><circle cx="911.500" cy="1046" r="4" fill="none" stroke="#d24726" stroke-width="1.600"/><path d="M906 1054 H918 M906 1058 H918" stroke="#d24726" stroke-width="1.600"/><path d="M892 1039.500 L909 1036.500 V1064.500 L892 1061.500 Z" fill="#d24726"/><text x="896" y="1056" font-size="14" font-weight="bold" fill="#fff">P</text><path d="M961 1036.500 L969.500 1057 H952.500 Z" fill="#ff8c1a"/><path d="M957.200 1045.500 H964.800 L966.800 1050.500 H955.200 Z" fill="#f4f4f4"/><path d="M952 1057 H970 L973 1063.500 H949 Z" fill="#f07a10"/><defs><linearGradient id="eg" x1="0" y1="0" x2="1" y2="1"><stop offset="0" stop-color="#35c1f1"/><stop offset=".6" stop-color="#1c7fd6"/><stop offset="1" stop-color="#0c59a4"/></linearGradient></defs><circle cx="1016" cy="1050" r="14.300" fill="url(#eg)"/><path d="M1003 1043 Q1008 1035.500 1017 1035.700 Q1029 1036.500 1030.300 1049 Q1030 1055 1024 1056 Q1027 1050 1023 1046 Q1016 1040 1003 1043 Z" fill="#3fd0a0"/><path d="M1022 1037 Q1029.500 1040 1030.300 1049 Q1030 1055 1024 1056 Q1027 1050 1024 1045 Z" fill="#58d86a"/><path d="M1010 1052 Q1011 1046 1017.500 1046 Q1023.500 1046.500 1024 1051 Q1024 1054.500 1020.500 1055.500 H1031 V1060 H1022 Q1012 1061 1010 1052 Z" fill="#1e1c24"/><path d="M1010 1052 Q1010.500 1060 1020 1061.500 Q1025 1061.500 1028.500 1058 Q1024 1066 1014 1064 Q1004 1061 1003.500 1051 Q1005 1046 1010 1052 Z" fill="#0c4f96"/><rect x="1068" y="1039" width="17" height="23" rx="1.500" fill="#fff"/><rect x="1075" y="1042" width="6" height="5" fill="none" stroke="#3955a3" stroke-width="1.300"/><path d="M1078 1047 V1052" stroke="#3955a3" stroke-width="1.300"/><circle cx="1078" cy="1055.500" r="3" fill="none" stroke="#3955a3" stroke-width="1.300"/><path d="M1057 1039.500 L1074 1036.500 V1064.500 L1057 1061.500 Z" fill="#3955a3"/><text x="1060.500" y="1056" font-size="14" font-weight="bold" fill="#fff">V</text><rect x="1123" y="1039" width="17" height="23" rx="1.500" fill="#fff"/><path d="M1126 1044 H1138 M1126 1048 H1138 M1126 1052 H1138 M1126 1056 H1138 M1132 1042 V1059" stroke="#217346" stroke-width="1.500"/><path d="M1112 1039.500 L1129 1036.500 V1064.500 L1112 1061.500 Z" fill="#217346"/><text x="1115.500" y="1056" font-size="14" font-weight="bold" fill="#fff">X</text><circle cx="1180.5" cy="1050" r="13.8" fill="#fbbc05"/><path d="M1180.5 1050 L1168.5 1043.1 A13.8 13.8 0 0 1 1192.5 1043.1 Z" fill="#ea4335"/><path d="M1180.5 1050 L1168.5 1043.1 A13.8 13.8 0 0 0 1180.5 1063.8 Z" fill="#34a853"/><path d="M1180.5 1043.7 H1194.0 A13.8 13.8 0 0 0 1192.5 1043.1 Z" fill="#ea4335"/><circle cx="1180.5" cy="1050" r="6.300" fill="#fff"/><circle cx="1180.5" cy="1050" r="5" fill="#4285f4"/><rect x="1224.500" y="1035.500" width="22.500" height="29.500" rx="2.500" fill="#5a6e86"/><rect x="1227.500" y="1038.500" width="16.500" height="6" fill="#57c7f5"/><rect x="1227.5" y="1046.5" width="4.800" height="4.800" fill="#d8dee6"/><rect x="1233.3" y="1046.5" width="4.800" height="4.800" fill="#d8dee6"/><rect x="1239.1" y="1046.5" width="4.800" height="4.800" fill="#d8dee6"/><rect x="1227.5" y="1052.3" width="4.800" height="4.800" fill="#d8dee6"/><rect x="1233.3" y="1052.3" width="4.800" height="4.800" fill="#d8dee6"/><rect x="1239.1" y="1052.3" width="4.800" height="4.800" fill="#1d6fc4"/><rect x="1227.5" y="1058.1" width="4.800" height="4.800" fill="#d8dee6"/><rect x="1233.3" y="1058.1" width="4.800" height="4.800" fill="#d8dee6"/><rect x="1239.1" y="1058.1" width="4.800" height="4.800" fill="#1d6fc4"/><rect x="1276" y="1035.500" width="30" height="29.500" fill="#10807c"/><path d="M1283 1061 H1299 V1057.500 H1283 Z M1284 1056.500 H1298 L1302.500 1046 Q1299 1042.500 1295 1046.500 Q1294 1043 1291 1043 Q1288 1043 1287 1046.500 Q1283 1042.500 1279.500 1046 Z" fill="#fff" stroke="#111" stroke-width="1.200"/><path d="M1291 1037 V1043 M1288.500 1039.500 H1293.500" stroke="#111" stroke-width="2"/><rect x="1321.500" y="1025" width="49" height="50" rx="4" fill="#34323b"/><rect x="1331" y="1035.500" width="30" height="29" rx="2" fill="url(#ms)"/><g stroke="#f07a1e" stroke-width="2.700"><path d="M1340.2 1063.500 L1341.8 1051.500"/><path d="M1344.6 1063.500 L1347.2 1045"/><path d="M1349.6 1063.500 L1353.2 1037"/></g><rect x="1336.500" y="1070" width="19.500" height="3.300" rx="1.600" fill="#4cc2ff"/><rect x="1387" y="1036" width="29" height="29" rx="3" fill="#241c22" stroke="#8a1a2a" stroke-width="1.400"/><text x="1389.500" y="1059.500" font-size="14" fill="#9a2036" letter-spacing="-0.5">Pro</text><path d="M1403 1041.500 h5 l-2.500 -2 z M1393 1044 h3" stroke="#9a2036" fill="#9a2036" stroke-width="1"/><rect x="681.7" y="1070.500" width="8" height="3" rx="1.500" fill="#8a8a8a"/><rect x="846.7" y="1070.500" width="8" height="3" rx="1.500" fill="#8a8a8a"/><rect x="1121.7" y="1070.500" width="8" height="3" rx="1.500" fill="#8a8a8a"/><rect x="1231.7" y="1070.500" width="8" height="3" rx="1.500" fill="#8a8a8a"/><rect x="1396.7" y="1070.500" width="8" height="3" rx="1.500" fill="#8a8a8a"/><path d="M1628.500 1054 L1636 1046.500 L1643.500 1054" fill="none" stroke="#fff" stroke-width="1.500"/><path d="M1660 1057 Q1655.500 1057 1656 1053 Q1656.500 1049.500 1660 1049.500 Q1661 1044 1666 1044.500 Q1670 1045 1671 1048.500 Q1675.500 1048.500 1675.500 1053 Q1675.500 1057 1671 1057 Z" fill="#c8c8c8"/><circle cx="1670.800" cy="1054.800" r="5.200" fill="#e81123"/><path d="M1668.500 1052.500 L1673.100 1057.100 M1673.100 1052.500 L1668.500 1057.100" stroke="#fff" stroke-width="1.300"/><g fill="none" stroke="#fff" stroke-width="1.700" stroke-linecap="round"><path d="M1691.500 1047.500 A13 13 0 0 1 1710 1047.500"/><path d="M1694.700 1050.700 A8.500 8.500 0 0 1 1706.800 1050.700"/><path d="M1697.800 1053.700 A4.200 4.200 0 0 1 1703.700 1053.700"/></g><circle cx="1700.800" cy="1056" r="1.500" fill="#fff"/><path d="M1721.500 1046.800 H1725 L1729.500 1042.500 V1057.500 L1725 1053.200 H1721.500 Z" fill="none" stroke="#fff" stroke-width="1.400" stroke-linejoin="round"/><g fill="none" stroke="#fff" stroke-width="1.400" stroke-linecap="round"><path d="M1732.500 1046.500 A4.500 4.500 0 0 1 1732.500 1053.500"/><path d="M1735 1044 A8 8 0 0 1 1735 1056"/><path d="M1737.500 1041.500 A11.500 11.500 0 0 1 1737.500 1058.500"/></g><rect x="1755.500" y="1044.500" width="13" height="10.500" rx="1.500" fill="none" stroke="#fff" stroke-width="1.500"/><rect x="1769" y="1047.500" width="2" height="4.500" fill="#fff"/><rect x="1757.500" y="1049" width="4" height="4.500" fill="#fff"/><path d="M1751.500 1042 V1045 M1755 1042 V1045 M1750.800 1045 H1755.800 V1048.500 Q1755.800 1050 1753.300 1050 Q1750.800 1050 1750.800 1048.500 Z M1753.300 1050 V1055 H1756" stroke="#fff" stroke-width="1.300" fill="#fff"/>
</svg>
<svg width="1920" height="1080"><text x="64.3" y="1045.6" font-size="15" fill="#fff" textLength="33.1" lengthAdjust="spacingAndGlyphs" >20°C</text><text x="64.3" y="1065.6" font-size="15" fill="#d2d2d2" textLength="59.7" lengthAdjust="spacingAndGlyphs" >Nublado</text><text x="1829.3" y="1045" font-size="14.5" fill="#fff" textLength="36.4" lengthAdjust="spacingAndGlyphs" >20:44</text><text x="1790.1" y="1065" font-size="14.5" fill="#fff" textLength="75.6" lengthAdjust="spacingAndGlyphs" >12/09/2022</text></svg><div class="abs" style="left:1875px;top:1041px;width:20px;height:20px;border-radius:10px;background:#4cc2ff;color:#111;font-size:13px;line-height:20px;text-align:center">1</div>
</div>
</body></html>
